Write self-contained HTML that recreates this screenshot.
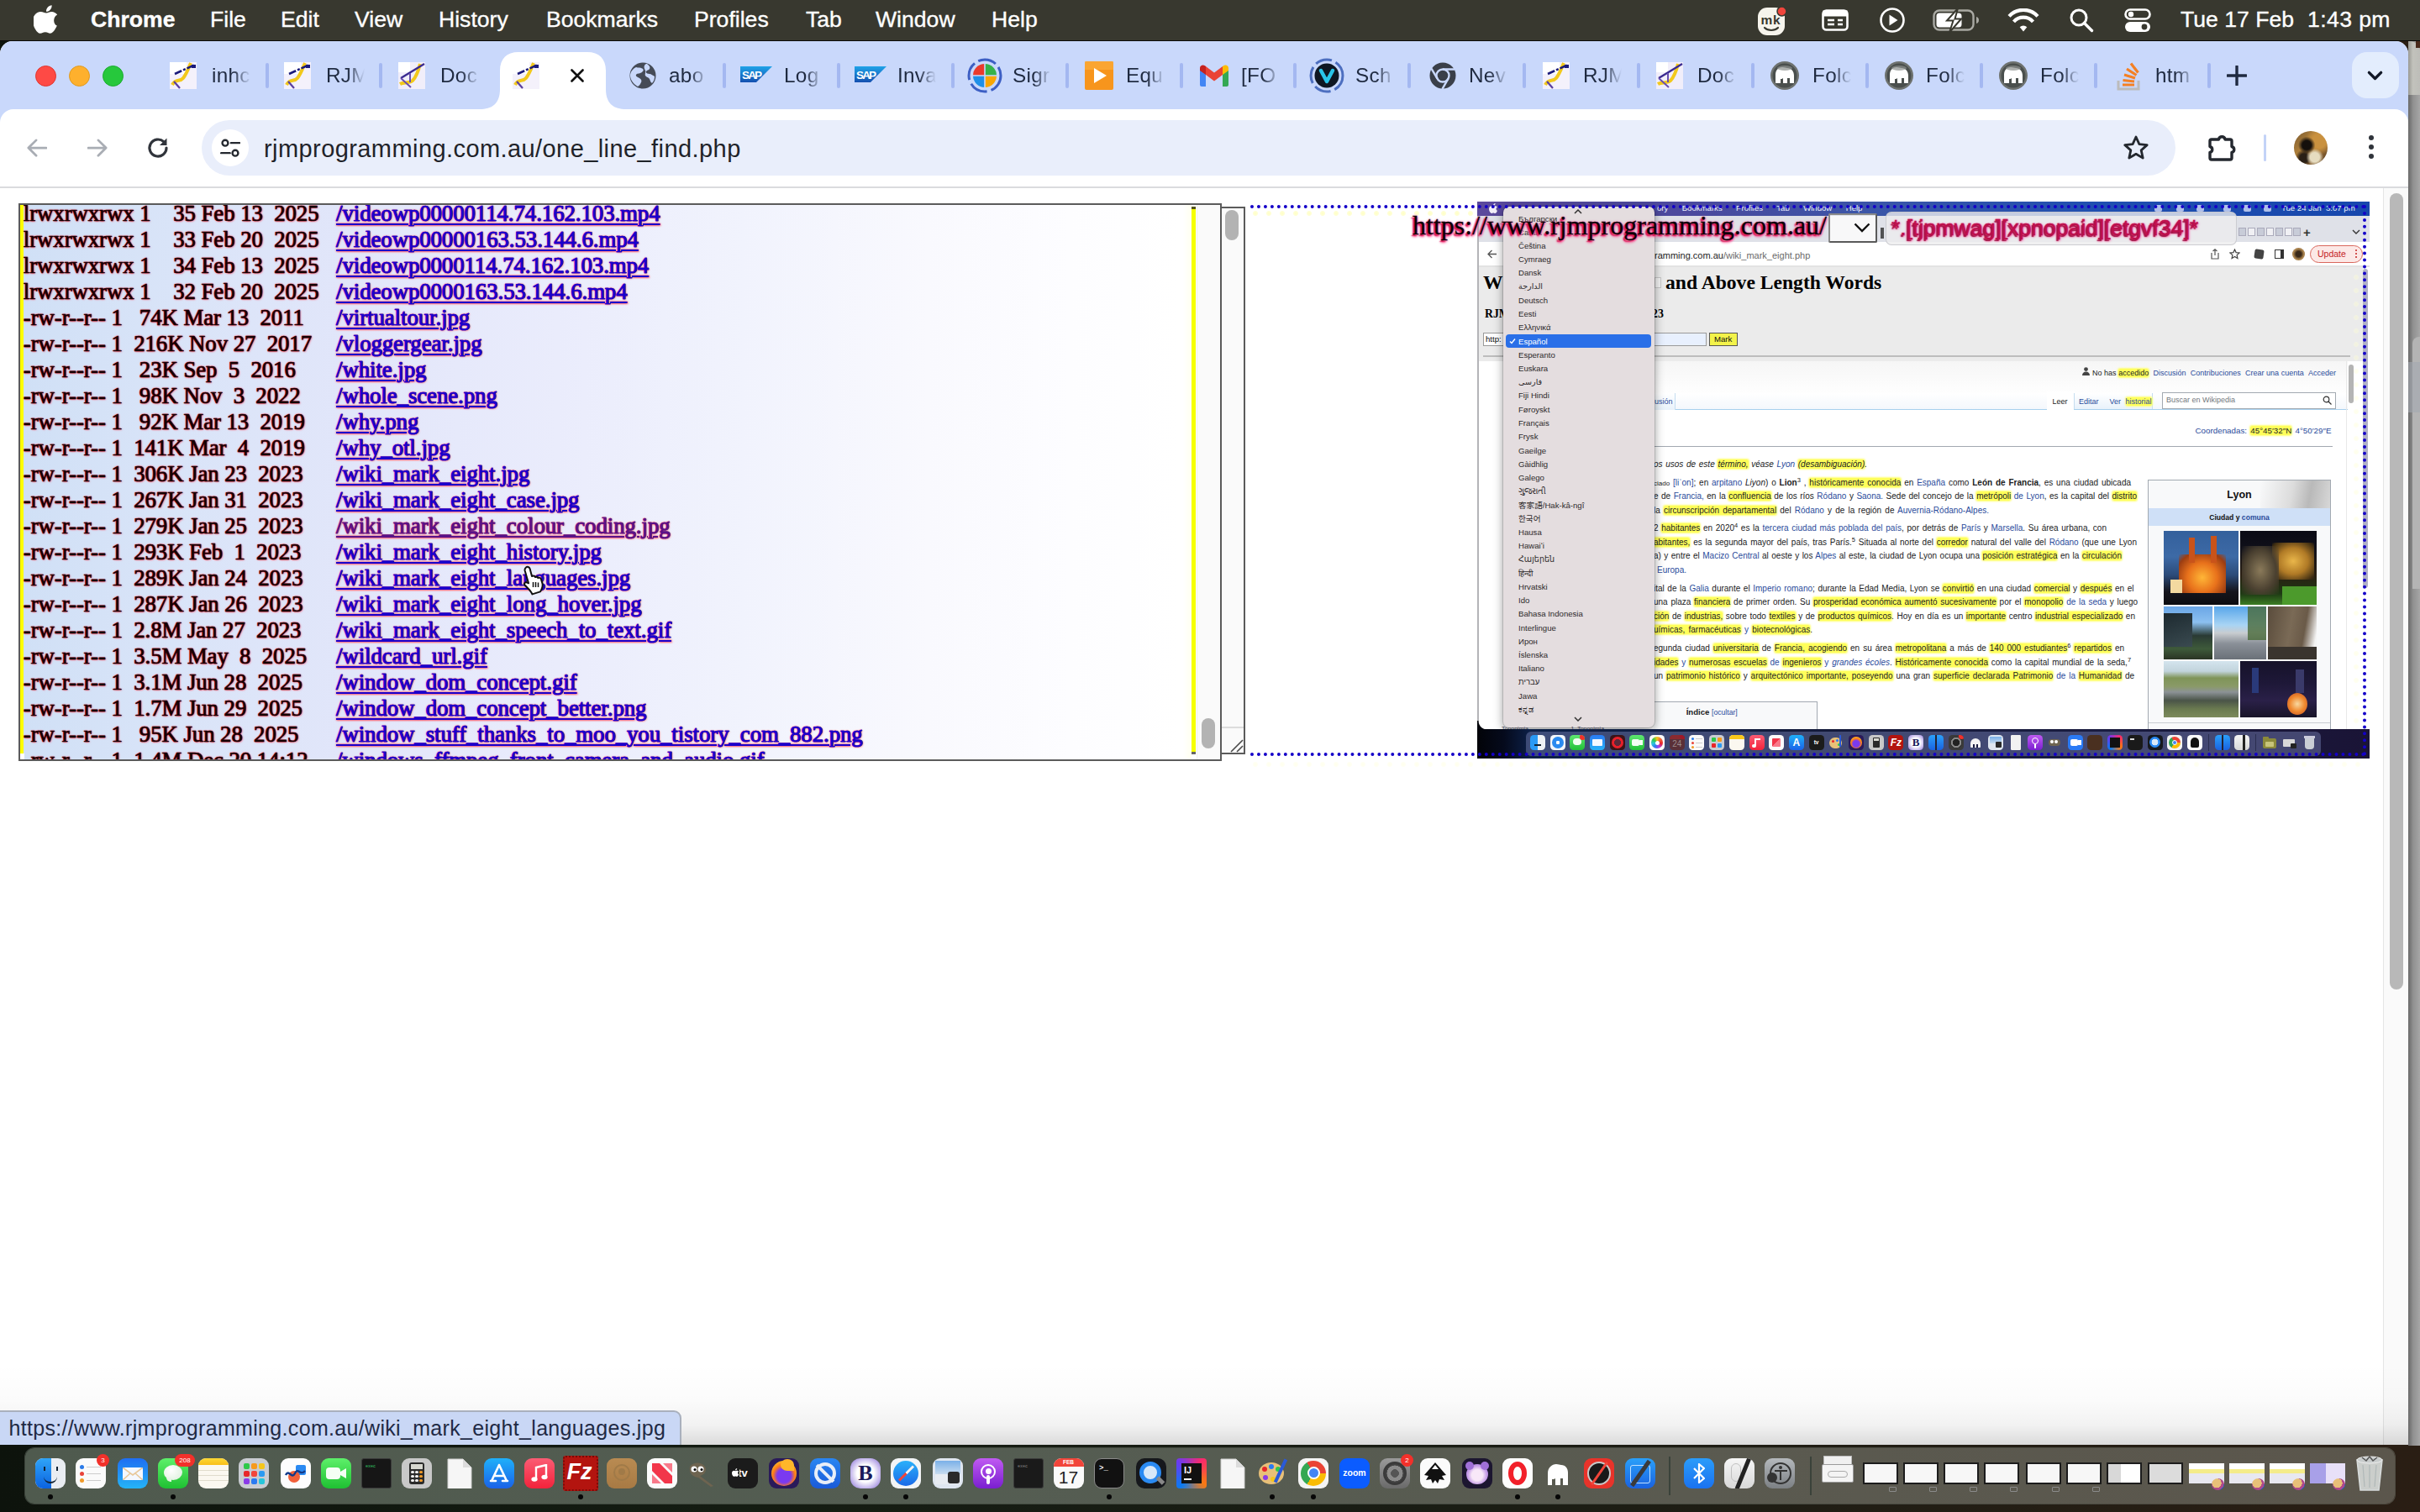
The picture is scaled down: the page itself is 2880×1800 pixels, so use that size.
<!DOCTYPE html>
<html lang="en"><head><meta charset="utf-8"><title>one_line_find</title>
<style>
*{box-sizing:border-box;margin:0;padding:0}
html,body{width:2880px;height:1800px;overflow:hidden;background:#10170f;font-family:"Liberation Sans",sans-serif}
.abs,.abs div,.abs svg,#menubar span{position:absolute}
#desk{left:0;top:0;width:2880px;height:1800px;background:linear-gradient(90deg,#0d130c 0%,#141c12 30%,#1a1d14 60%,#2a1e14 100%)}
#menubar{left:0;top:0;width:2880px;height:49px;background:#38382f;border-bottom:1.500px solid #0a0a08}
#menubar span{top:0;height:48px;line-height:47px;color:#fff;font-size:26.6px;white-space:pre;-webkit-text-stroke:.35px #fff}
#win{left:0;top:49px;width:2866px;height:1671px;background:#fff;border-radius:15px 15px 0 0;overflow:hidden}
#tabstrip{left:0;top:0;width:2866px;height:110px;background:#c9d8fb}
.tt{top:23.500px;height:34px;line-height:34px;font-size:24.300px;color:#1f2a40;white-space:pre;overflow:hidden;width:46px;letter-spacing:.3px;
 -webkit-mask-image:linear-gradient(90deg,#000 55%,transparent 100%);mask-image:linear-gradient(90deg,#000 55%,transparent 100%)}
.sep{top:26px;width:4px;height:30px;background:#a4b8f1;border-radius:2px}
.fav{top:25px;width:32px;height:32px}
#toolbar{left:0;top:81px;width:2866px;height:92px;background:#fff;border-radius:16px 16px 0 0}
#omni{left:240px;top:13px;width:2349px;height:66px;border-radius:33px;background:#e9eefb}
#tbline{left:0;top:173px;width:2866px;height:2px;background:#dadbde}

#lp{left:22px;top:242px;width:1432px;height:664px;border:2px solid #5b5b5b;background:#fff;overflow:hidden}
#lpbg{left:0;top:0;width:1400px;height:660px;background:linear-gradient(90deg,#d0e0f6 0,#d9e4f8 180px,#e2e6fa 400px,#eaecfc 640px,#f1f3fd 860px,#f9f9fe 1080px,#fdfdff 1250px,#fff 1380px)}
.rw{left:3.800px;-webkit-text-stroke:.7px #1c0006;height:31px;line-height:31px;font:400 26.670px/31px "Liberation Serif",serif;white-space:pre;color:#120003;text-shadow:0 0 2px #ff1424,0 0 1px #ff1424,1px 1px 2px rgba(255,70,90,.5)}
.lk{left:376px;-webkit-text-stroke:.65px #1a00cc;height:31px;font:400 26.670px/31px "Liberation Serif",serif;white-space:pre;color:#1a00cc;text-decoration:underline;text-decoration-thickness:2px;text-underline-offset:3px;text-shadow:0 0 2px #ff1424,0 0 1px #ff1424,1px 1px 2px rgba(255,70,90,.5)}

#mini{left:1758px;top:240px;width:1062px;height:663px;overflow:hidden;background:#fff}
#mi{left:-1758px;top:-240px;width:2880px;height:1800px}
.wl{height:16px;font:400 10px/16px "Liberation Sans",sans-serif;color:#202122;white-space:nowrap;text-align:justify;text-align-last:justify}
.wl a,.ws a{color:#2a4b9b}
.wl mark,.ws mark{background:#ffff5a;color:inherit;box-shadow:0 0 2px 1px #ffff7a;border-radius:2px}
.ws{height:14px;font:400 9px/14px "Liberation Sans",sans-serif;color:#202122;white-space:nowrap;text-align:justify;text-align-last:justify}
.dd{left:1807px;height:16px;font:400 9.600px/16px "Liberation Sans","DejaVu Sans","Noto Sans CJK KR","Noto Sans CJK TC",sans-serif;color:#2e2a2b;white-space:nowrap}
.ph{overflow:hidden}
.wl sup,.ws sup{font-size:7.500px;line-height:0;vertical-align:4.500px}


#hdr{left:1681px;top:250px;height:37px;font:400 32px/37px "Liberation Serif",serif;color:#0c0006;white-space:pre;-webkit-text-stroke:.4px #14000a;text-shadow:-2px 2px 1.500px #d8104f,-1px 3px 3px #ff4f95,1px 1px 2px #ff6aa8,0 0 3px #ff5aa0}
#sel{left:2176px;top:253.500px;width:58px;height:35px;background:rgba(252,252,252,.86);border:2px solid #8a8a8a;border-right-color:#5a5a5a;border-bottom-color:#5a5a5a;border-radius:2px}
#inp{left:2244px;top:251.700px;width:418px;height:40px;border-radius:7px;background:rgba(236,236,238,.8);border:1.500px solid rgba(200,200,205,.9)}
#inpt{left:2251px;top:255px;height:32px;font:400 26.500px/32px "Liberation Sans",sans-serif;white-space:pre;color:#c4104e;-webkit-text-stroke:.5px #b00c48;text-shadow:-1.500px 1.500px 1px #a01244,-1px 2px 3px #ff4f98,1px 1px 3px #ff7ab8,0 0 2px #ff3a8a}
#bubble{left:-2px;top:1678.500px;width:813px;height:44px;background:#c9d7f5;border:2px solid #a9b0bd;border-radius:0 9px 0 0}
#bubble div{left:10.500px;top:3px;height:32px;font:400 25px/32px "Liberation Sans",sans-serif;letter-spacing:.32px;color:#1f2a44;white-space:pre}
#dock{left:30px;top:1724px;width:2820px;height:66px;border-radius:11px;background:linear-gradient(90deg,#4f5a4e 0,#545d52 40%,#5a5a50 70%,#5b564c 100%);box-shadow:0 0 0 1px rgba(150,160,150,.35)}
.di{top:11.500px;width:36px;height:36px;border-radius:9px;overflow:hidden}
.dot{top:55px;width:6px;height:6px;border-radius:50%;background:#070707}
.th{top:17px;width:42px;height:26px;background:#f7f7f7;border:2px solid #1c1c1c}
#pg{left:0;top:-49px;width:2866px;height:1769px}
</style></head>
<body><div id="desk" class="abs"></div><div id="menubar" class="abs"><svg style="left:40px;top:6px" width="30" height="34" viewBox="0 0 30 34"><path fill="#fff" d="M21.6 0.3c.2 1.9-.6 3.8-1.7 5.100-1.200 1.400-3.100 2.400-4.900 2.300-.2-1.900.7-3.800 1.700-5 1.200-1.400 3.300-2.400 4.900-2.400zM27.800 24.600c-.8 1.800-1.200 2.600-2.200 4.200-1.400 2.200-3.400 4.900-5.900 4.900-2.200 0-2.800-1.400-5.800-1.400s-3.700 1.400-5.900 1.500c-2.400.1-4.300-2.400-5.700-4.600C-1.600 23.100-2 15.900 1.200 12c1.800-2.500 4.600-3.900 7.200-3.900 2.700 0 4.400 1.500 6.600 1.500 2.200 0 3.500-1.500 6.600-1.500 2.300 0 4.800 1.300 6.600 3.500-5.800 3.200-4.800 11.400-.4 13z"/></svg><span style="left:108px;font-weight:700;">Chrome</span><span style="left:250px;">File</span><span style="left:334px;">Edit</span><span style="left:422px;">View</span><span style="left:522px;">History</span><span style="left:650px;">Bookmarks</span><span style="left:826px;">Profiles</span><span style="left:959px;">Tab</span><span style="left:1042px;">Window</span><span style="left:1180px;">Help</span><span style="left:2595px">Tue 17 Feb</span><span style="left:2746px;letter-spacing:.4px">1:43 pm</span><svg style="left:2090px;top:6px" width="42" height="38" viewBox="0 0 42 38"><rect x="2" y="3" width="32" height="33" rx="11" fill="#f6f4ec"/><circle cx="30.500" cy="7.500" r="5.500" fill="#f0453c" stroke="#38382f" stroke-width="1.500"/><text x="5.500" y="23" font-family="Liberation Sans" font-weight="700" font-size="15.500" fill="#38382f" textLength="23">mk</text><path d="M10 27c4 4 12 4 16 0" fill="none" stroke="#38382f" stroke-width="2.200" stroke-linecap="round"/></svg>
<svg style="left:2168px;top:11px" width="32" height="26" viewBox="0 0 32 26"><rect x="1.500" y="1.500" width="29" height="23" rx="4" fill="none" stroke="#fff" stroke-width="2.600"/><rect x="1.500" y="1.500" width="29" height="7" fill="#fff"/><path d="M7 13h8M7 18h8M19 13h6M19 18h6" stroke="#fff" stroke-width="2.400"/></svg>
<svg style="left:2236px;top:8px" width="32" height="32" viewBox="0 0 32 32"><circle cx="16" cy="16" r="13.500" fill="none" stroke="#fff" stroke-width="2.600"/><path d="M12.500 9.500v13l10-6.500z" fill="#fff"/></svg>
<svg style="left:2300px;top:11px;overflow:visible" width="58" height="27" viewBox="0 0 58 27"><rect x="1.500" y="1.500" width="47" height="23" rx="6.500" fill="none" stroke="#a9a9a3" stroke-width="2.400"/><rect x="4.500" y="4.500" width="30" height="17" rx="3.500" fill="#fff"/><path d="M52 9v8c2-.6 3-2 3-4s-1-3.400-3-4z" fill="#a9a9a3"/><path d="M30 -1l-13 14.500h7.500l-4.500 14 14-16h-7.500z" fill="#fff" stroke="#38382f" stroke-width="2"/></svg>
<svg style="left:2389px;top:10px" width="38" height="28" viewBox="0 0 38 28"><path d="M19 27.500l4.300-5.300a6.200 6.200 0 0 0-8.600 0z" fill="#fff"/><path d="M7.500 15.800a15.500 15.500 0 0 1 23 0M2 9.300a23 23 0 0 1 34 0" fill="none" stroke="#fff" stroke-width="4.200" stroke-linecap="butt"/></svg>
<svg style="left:2462px;top:9px" width="30" height="30" viewBox="0 0 30 30"><circle cx="12" cy="12" r="9" fill="none" stroke="#fff" stroke-width="3"/><path d="M18.500 18.500l9 9" stroke="#fff" stroke-width="3.400" stroke-linecap="round"/></svg>
<svg style="left:2528px;top:10px" width="32" height="29" viewBox="0 0 32 29"><rect x="1.500" y="1.500" width="29" height="11" rx="5.500" fill="none" stroke="#fff" stroke-width="2.600"/><circle cx="8" cy="7" r="3.200" fill="#fff"/><rect x="1" y="16" width="30" height="12" rx="6" fill="#fff"/><circle cx="24" cy="22" r="3.400" fill="#38382f"/></svg></div><div id="win" class="abs"><div id="tabstrip"></div><svg style="left:571px;top:13px" width="174" height="68" viewBox="0 0 174 68"><path d="M0 68C14 68 24 62 24 44V22C24 8 32 0 46 0h82c14 0 22 8 22 22v22c0 18 10 24 24 24z" fill="#fff"/></svg><svg class="fav" style="left:202px" viewBox="0 0 32 32"><rect width="32" height="32" fill="#f4f1fb"/><rect x="0" y="0" width="20" height="14" fill="#fff"/><path d="M3 27c4-8 9-3 13-8 4-5 6-11 9-18" fill="none" stroke="#f2c91c" stroke-width="4"/><path d="M6 14L30 3" stroke="#1a1a7a" stroke-width="2.600" stroke-dasharray="9 2 3 2"/><rect x="26" y="3" width="5" height="4" fill="#1a1a7a"/><path d="M5 23l7 8" stroke="#5a3fa0" stroke-width="2.200"/></svg><div class="tt" style="left:252px">inhc</div><div class="sep" style="left:316px"></div><svg class="fav" style="left:338px" viewBox="0 0 32 32"><rect width="32" height="32" fill="#f4f1fb"/><rect x="0" y="0" width="20" height="14" fill="#fff"/><path d="M3 27c4-8 9-3 13-8 4-5 6-11 9-18" fill="none" stroke="#f2c91c" stroke-width="4"/><path d="M6 14L30 3" stroke="#1a1a7a" stroke-width="2.600" stroke-dasharray="9 2 3 2"/><rect x="26" y="3" width="5" height="4" fill="#1a1a7a"/><path d="M5 23l7 8" stroke="#5a3fa0" stroke-width="2.200"/></svg><div class="tt" style="left:388px">RJM</div><div class="sep" style="left:451px"></div><svg class="fav" style="left:474px" viewBox="0 0 32 32"><rect width="32" height="32" fill="#f1eefa"/><rect x="0" y="0" width="14" height="12" fill="#fff"/><path d="M2 26c5-3 10 0 15-4 5-5 7-12 9-20" fill="none" stroke="#f2c91c" stroke-width="4"/><path d="M3 19L31 2" stroke="#3a2a90" stroke-width="2.400"/><path d="M3 19l12 11M14 13v11" stroke="#6a4fb0" stroke-width="2"/></svg><div class="tt" style="left:524px">Doc</div><svg class="fav" style="left:610px" viewBox="0 0 32 32"><rect width="32" height="32" fill="#f4f1fb"/><rect x="0" y="0" width="20" height="14" fill="#fff"/><path d="M3 27c4-8 9-3 13-8 4-5 6-11 9-18" fill="none" stroke="#f2c91c" stroke-width="4"/><path d="M6 14L30 3" stroke="#1a1a7a" stroke-width="2.600" stroke-dasharray="9 2 3 2"/><rect x="26" y="3" width="5" height="4" fill="#1a1a7a"/><path d="M5 23l7 8" stroke="#5a3fa0" stroke-width="2.200"/></svg><svg class="fav" style="left:748px;top:24px;width:34px;height:34px" viewBox="0 0 34 34"><circle cx="17" cy="17" r="15.500" fill="#454b57"/><path d="M9 7c3 1 6 0 8 2s-1 4-3 5-4 0-5 2 2 3 4 4 3 3 2 5-2 4-4 5C6 27 2 22 2 17 2 13 5 9 9 7zM22 3c3 2 4 4 3 6s-3 1-4 3 2 3 4 3 4 2 6 3c0 3-1 6-3 8-2-1-2-3-3-5s-4-2-5-4 1-4 0-6-2-4-1-6 2-2 3-2z" fill="#c9d8fb"/></svg><div class="tt" style="left:796px">abo</div><div class="sep" style="left:860px"></div><svg class="fav" style="left:881px;top:28px;width:38px;height:24px" viewBox="0 0 38 24"><defs><linearGradient id="sg881" x1="0" y1="0" x2="0" y2="1"><stop offset="0" stop-color="#1fa3e8"/><stop offset="1" stop-color="#1450b0"/></linearGradient></defs><path d="M0 2h38L19 21H0z" fill="url(#sg881)"/><text x="2" y="17" font-family="Liberation Sans" font-weight="700" font-size="13.500" fill="#fff" style="position:static" textLength="24">SAP</text></svg><div class="tt" style="left:933px">Log</div><div class="sep" style="left:996px"></div><svg class="fav" style="left:1017px;top:28px;width:38px;height:24px" viewBox="0 0 38 24"><defs><linearGradient id="sg1017" x1="0" y1="0" x2="0" y2="1"><stop offset="0" stop-color="#1fa3e8"/><stop offset="1" stop-color="#1450b0"/></linearGradient></defs><path d="M0 2h38L19 21H0z" fill="url(#sg1017)"/><text x="2" y="17" font-family="Liberation Sans" font-weight="700" font-size="13.500" fill="#fff" style="position:static" textLength="24">SAP</text></svg><div class="tt" style="left:1068px">Inva</div><div class="sep" style="left:1132px"></div><svg class="fav" style="left:1151px;top:20px;width:42px;height:42px" viewBox="0 0 42 42"><circle cx="21" cy="21" r="19" fill="none" stroke="#3d5fc4" stroke-width="3" stroke-dasharray="22 5"/><path d="M21 21V7A14 14 0 0 0 7 21z" fill="#ea3a2d"/><path d="M21 21h14A14 14 0 0 0 21 7z" fill="#36b24a"/><path d="M21 21H7a14 14 0 0 0 14 14z" fill="#1f8fe8"/><path d="M21 21v14a14 14 0 0 0 14-14z" fill="#f9a602"/><path d="M21 6v30M6 21h30" stroke="#c9d8fb" stroke-width="1.600"/></svg><div class="tt" style="left:1205px">Sigr</div><div class="sep" style="left:1268px"></div><svg class="fav" style="left:1291px;top:24px;width:34px;height:34px" viewBox="0 0 34 34"><rect width="34" height="34" rx="2" fill="#f7951d"/><rect x="0" y="0" width="34" height="10" fill="#fbb040" opacity=".6"/><path d="M11 8v18l15-9z" fill="#fff"/></svg><div class="tt" style="left:1340px">Equ</div><div class="sep" style="left:1404px"></div><svg class="fav" style="left:1428px;top:28px;width:34px;height:26px" viewBox="0 0 34 26"><path d="M0 4v20a2 2 0 0 0 2 2h5V9z" fill="#4285f4"/><path d="M34 4v20a2 2 0 0 1-2 2h-5V9z" fill="#34a853"/><path d="M27 2v10l7-5V4c0-3-3.500-4.500-6-2.700z" fill="#fbbc04"/><path d="M7 12V2l10 7.500L27 2v10l-10 7.500z" fill="#ea4335"/><path d="M0 4v3l7 5V2L6 1.300C3.500-.5 0 1 0 4z" fill="#c5221f"/></svg><div class="tt" style="left:1477px">[FO</div><div class="sep" style="left:1539px"></div><svg class="fav" style="left:1558px;top:20px;width:42px;height:42px" viewBox="0 0 42 42"><circle cx="21" cy="21" r="19" fill="none" stroke="#4d6fc0" stroke-width="3" stroke-dasharray="20 5"/><circle cx="21" cy="21" r="14.500" fill="#0f1722"/><path d="M14 15l7 13 7-13" fill="none" stroke="#29c4e8" stroke-width="4.500" stroke-linejoin="round" stroke-linecap="round"/></svg><div class="tt" style="left:1613px">Sch</div><div class="sep" style="left:1675px"></div><svg class="fav" style="left:1700px;top:24px;width:34px;height:34px" viewBox="0 0 34 34"><circle cx="17" cy="17" r="15.500" fill="#3a3f49"/><circle cx="17" cy="17" r="7.500" fill="none" stroke="#c9d8fb" stroke-width="2.400"/><path d="M17 9.500h14M10.500 20.700L3.500 8.600M23.500 20.700l-7 12.100" stroke="#c9d8fb" stroke-width="2.400"/><circle cx="17" cy="17" r="5" fill="#3a3f49"/></svg><div class="tt" style="left:1748px">Nev</div><div class="sep" style="left:1812px"></div><svg class="fav" style="left:1836px" viewBox="0 0 32 32"><rect width="32" height="32" fill="#f4f1fb"/><rect x="0" y="0" width="20" height="14" fill="#fff"/><path d="M3 27c4-8 9-3 13-8 4-5 6-11 9-18" fill="none" stroke="#f2c91c" stroke-width="4"/><path d="M6 14L30 3" stroke="#1a1a7a" stroke-width="2.600" stroke-dasharray="9 2 3 2"/><rect x="26" y="3" width="5" height="4" fill="#1a1a7a"/><path d="M5 23l7 8" stroke="#5a3fa0" stroke-width="2.200"/></svg><div class="tt" style="left:1884px">RJM</div><div class="sep" style="left:1948px"></div><svg class="fav" style="left:1971px" viewBox="0 0 32 32"><rect width="32" height="32" fill="#f1eefa"/><rect x="0" y="0" width="14" height="12" fill="#fff"/><path d="M2 26c5-3 10 0 15-4 5-5 7-12 9-20" fill="none" stroke="#f2c91c" stroke-width="4"/><path d="M3 19L31 2" stroke="#3a2a90" stroke-width="2.400"/><path d="M3 19l12 11M14 13v11" stroke="#6a4fb0" stroke-width="2"/></svg><div class="tt" style="left:2020px">Doc</div><div class="sep" style="left:2084px"></div><svg class="fav" style="left:2106px;top:23px;width:36px;height:36px" viewBox="0 0 36 36"><circle cx="18" cy="18" r="17" fill="#6e726f"/><circle cx="18" cy="18" r="14.500" fill="#4a4f4d"/><path d="M7 27V17c0-6 4-9 8-9 3 0 4 1 6 1 5 0 8 4 8 9v9h-5v-6h-3v6h-5v-6c-1 1-2 1-3 1v5z" fill="#fff"/><ellipse cx="18" cy="9" rx="9" ry="3" fill="#8c908d" opacity=".7"/></svg><div class="tt" style="left:2157px">Folc</div><div class="sep" style="left:2220px"></div><svg class="fav" style="left:2242px;top:23px;width:36px;height:36px" viewBox="0 0 36 36"><circle cx="18" cy="18" r="17" fill="#6e726f"/><circle cx="18" cy="18" r="14.500" fill="#4a4f4d"/><path d="M7 27V17c0-6 4-9 8-9 3 0 4 1 6 1 5 0 8 4 8 9v9h-5v-6h-3v6h-5v-6c-1 1-2 1-3 1v5z" fill="#fff"/><ellipse cx="18" cy="9" rx="9" ry="3" fill="#8c908d" opacity=".7"/></svg><div class="tt" style="left:2292px">Folc</div><div class="sep" style="left:2356px"></div><svg class="fav" style="left:2378px;top:23px;width:36px;height:36px" viewBox="0 0 36 36"><circle cx="18" cy="18" r="17" fill="#6e726f"/><circle cx="18" cy="18" r="14.500" fill="#4a4f4d"/><path d="M7 27V17c0-6 4-9 8-9 3 0 4 1 6 1 5 0 8 4 8 9v9h-5v-6h-3v6h-5v-6c-1 1-2 1-3 1v5z" fill="#fff"/><ellipse cx="18" cy="9" rx="9" ry="3" fill="#8c908d" opacity=".7"/></svg><div class="tt" style="left:2428px">Folc</div><div class="sep" style="left:2492px"></div><svg class="fav" style="left:2519px;top:23px;width:28px;height:36px" viewBox="0 0 28 36"><path d="M2 24v10h24V24" fill="none" stroke="#bcbbbb" stroke-width="3"/><path d="M7 29h14M7.500 23.500l13.500 1.500M9 17l13 4M12 10l11.500 7.500M17 3.500l8.500 11" stroke="#f48024" stroke-width="3.200"/></svg><div class="tt" style="left:2565px">htm</div><div class="sep" style="left:2627px"></div><svg style="left:678px;top:32px" width="18" height="18" viewBox="0 0 22 22"><path d="M3 3l16 16M19 3L3 19" stroke="#111" stroke-width="3.200" stroke-linecap="round"/></svg><svg style="left:2650px;top:29px" width="24" height="24" viewBox="0 0 24 24"><path d="M12 1v22M1 12h22" stroke="#1f2a40" stroke-width="3.400" stroke-linecap="round"/></svg><div style="left:2799px;top:13px;width:56px;height:55px;border-radius:18px;background:#e3edfd"></div><svg style="left:2817px;top:35px" width="19" height="12.700" viewBox="0 0 24 16"><path d="M3 3l9 9 9-9" fill="none" stroke="#111827" stroke-width="4.200" stroke-linecap="round" stroke-linejoin="round"/></svg><div style="left:41.5px;top:29.0px;width:25px;height:25px;border-radius:50%;background:#fe4a45;border:1px solid #e0352f"></div><div style="left:81.5px;top:29.0px;width:25px;height:25px;border-radius:50%;background:#feb02d;border:1px solid #e09a1f"></div><div style="left:121.5px;top:29.0px;width:25px;height:25px;border-radius:50%;background:#26c83c;border:1px solid #1aab2d"></div><div id="toolbar"><svg style="left:32px;top:35px" width="24" height="22.200" viewBox="0 0 26 24"><path d="M12 2L2 12l10 10M2.500 12H25" fill="none" stroke="#a9adb4" stroke-width="3" stroke-linecap="round" stroke-linejoin="round"/></svg><svg style="left:104px;top:35px" width="24" height="22.200" viewBox="0 0 26 24"><path d="M14 2l10 10-10 10M23.500 12H1" fill="none" stroke="#a9adb4" stroke-width="3" stroke-linecap="round" stroke-linejoin="round"/></svg><svg style="left:174px;top:32px" width="28" height="28" viewBox="0 0 28 28"><path d="M24 14a10 10 0 1 1-3.200-7.300" fill="none" stroke="#30343b" stroke-width="3.200" stroke-linecap="round"/><path d="M24.500 2.500v8.500H16z" fill="#30343b"/></svg><div id="omni"></div><div style="left:252px;top:24px;width:44px;height:44px;border-radius:50%;background:#fff"></div><svg style="left:262px;top:34.500px" width="24" height="22.300" viewBox="0 0 28 26"><circle cx="7" cy="6" r="4" fill="none" stroke="#24282f" stroke-width="2.800"/><path d="M15 6h12" stroke="#24282f" stroke-width="2.800" stroke-linecap="round"/><circle cx="21" cy="20" r="4" fill="none" stroke="#24282f" stroke-width="2.800"/><path d="M1.500 20h12" stroke="#24282f" stroke-width="2.800" stroke-linecap="round"/></svg><div style="left:314px;top:27px;height:40px;line-height:40px;font-size:29px;letter-spacing:.42px;color:#1f2329;white-space:pre">rjmprogramming.com.au/one_line_find.php</div><svg style="left:2526px;top:30px" width="32" height="32" viewBox="0 0 32 32"><path d="M16 3l3.900 8.600 9.300 1-7 6.300 2 9.200L16 23.300 7.800 28.100l2-9.200-7-6.300 9.300-1z" fill="none" stroke="#24282f" stroke-width="2.800" stroke-linejoin="round"/></svg><svg style="left:2624px;top:25px" width="40" height="40" viewBox="0 0 40 40"><path d="M8 11h8.500a3.800 3.800 0 0 1 7.500 0H30a2 2 0 0 1 2 2v6.500a3.600 3.600 0 0 1 0 7V33a2 2 0 0 1-2 2H8a2 2 0 0 1-2-2v-6.500a3.600 3.600 0 0 0 0-7V13a2 2 0 0 1 2-2z" fill="none" stroke="#24282f" stroke-width="3.400" stroke-linejoin="round"/></svg><div style="left:2694px;top:30px;width:3px;height:32px;background:#c3d3f7;border-radius:2px"></div><div style="left:2730px;top:26px;width:40px;height:40px;border-radius:50%;overflow:hidden;background:radial-gradient(circle at 38% 42%,#15100c 0 16%,transparent 30%),radial-gradient(circle at 62% 78%,#e6dcc0 0 14%,transparent 26%),radial-gradient(circle at 30% 80%,#2a2016 0 12%,transparent 24%),radial-gradient(circle at 75% 30%,#c9913f 0 20%,transparent 40%),linear-gradient(135deg,#7a5a30,#b8863c 45%,#8a6232 70%,#5a4020)"></div><div style="left:2819px;top:31px;width:6px;height:6px;border-radius:50%;background:#30343b"></div><div style="left:2819px;top:42px;width:6px;height:6px;border-radius:50%;background:#30343b"></div><div style="left:2819px;top:53px;width:6px;height:6px;border-radius:50%;background:#30343b"></div></div><div id="tbline"></div><div id="pg"><div id="lp"><div id="lpbg"></div><div class="rw" style="top:-5.2px">lrwxrwxrwx 1    35 Feb 13  2025</div><div class="lk" style="top:-5.2px">/videowp00000114.74.162.103.mp4</div><div class="rw" style="top:25.8px">lrwxrwxrwx 1    33 Feb 20  2025</div><div class="lk" style="top:25.8px">/videowp00000163.53.144.6.mp4</div><div class="rw" style="top:56.8px">lrwxrwxrwx 1    34 Feb 13  2025</div><div class="lk" style="top:56.8px">/videowp0000114.74.162.103.mp4</div><div class="rw" style="top:87.8px">lrwxrwxrwx 1    32 Feb 20  2025</div><div class="lk" style="top:87.8px">/videowp0000163.53.144.6.mp4</div><div class="rw" style="top:118.8px">-rw-r--r-- 1   74K Mar 13  2011</div><div class="lk" style="top:118.8px">/virtualtour.jpg</div><div class="rw" style="top:149.8px">-rw-r--r-- 1  216K Nov 27  2017</div><div class="lk" style="top:149.8px">/vloggergear.jpg</div><div class="rw" style="top:180.8px">-rw-r--r-- 1   23K Sep  5  2016</div><div class="lk" style="top:180.8px">/white.jpg</div><div class="rw" style="top:211.8px">-rw-r--r-- 1   98K Nov  3  2022</div><div class="lk" style="top:211.8px">/whole_scene.png</div><div class="rw" style="top:242.8px">-rw-r--r-- 1   92K Mar 13  2019</div><div class="lk" style="top:242.8px">/why.png</div><div class="rw" style="top:273.8px">-rw-r--r-- 1  141K Mar  4  2019</div><div class="lk" style="top:273.8px">/why_otl.jpg</div><div class="rw" style="top:304.8px">-rw-r--r-- 1  306K Jan 23  2023</div><div class="lk" style="top:304.8px">/wiki_mark_eight.jpg</div><div class="rw" style="top:335.8px">-rw-r--r-- 1  267K Jan 31  2023</div><div class="lk" style="top:335.8px">/wiki_mark_eight_case.jpg</div><div class="rw" style="top:366.8px">-rw-r--r-- 1  279K Jan 25  2023</div><div class="lk" style="top:366.8px;color:#5a1288;-webkit-text-stroke-color:#5a1288">/wiki_mark_eight_colour_coding.jpg</div><div class="rw" style="top:397.8px">-rw-r--r-- 1  293K Feb  1  2023</div><div class="lk" style="top:397.8px">/wiki_mark_eight_history.jpg</div><div class="rw" style="top:428.8px">-rw-r--r-- 1  289K Jan 24  2023</div><div class="lk" style="top:428.8px">/wiki_mark_eight_languages.jpg</div><div class="rw" style="top:459.8px">-rw-r--r-- 1  287K Jan 26  2023</div><div class="lk" style="top:459.8px">/wiki_mark_eight_long_hover.jpg</div><div class="rw" style="top:490.8px">-rw-r--r-- 1  2.8M Jan 27  2023</div><div class="lk" style="top:490.8px">/wiki_mark_eight_speech_to_text.gif</div><div class="rw" style="top:521.8px">-rw-r--r-- 1  3.5M May  8  2025</div><div class="lk" style="top:521.8px">/wildcard_url.gif</div><div class="rw" style="top:552.8px">-rw-r--r-- 1  3.1M Jun 28  2025</div><div class="lk" style="top:552.8px">/window_dom_concept.gif</div><div class="rw" style="top:583.8px">-rw-r--r-- 1  1.7M Jun 29  2025</div><div class="lk" style="top:583.8px">/window_dom_concept_better.png</div><div class="rw" style="top:614.8px">-rw-r--r-- 1   95K Jun 28  2025</div><div class="lk" style="top:614.8px">/window_stuff_thanks_to_moo_you_tistory_com_882.png</div><div class="rw" style="top:645.8px">-rw-r--r-- 1  1.4M Dec 20 14:12</div><div class="lk" style="top:645.8px">/windows_ffmpeg_front_camera_and_audio.gif</div><div style="left:0;top:0;width:4px;height:653px;background:#ffff00"></div><div style="left:0;top:653px;width:5px;height:8px;background:#fff"></div><div style="left:1394px;top:2px;width:4.500px;height:651px;background:#f6ff00"></div><div style="left:1394px;top:2px;width:4.500px;height:3px;background:#55551a"></div><div style="left:1393px;top:651px;width:6px;height:3px;background:#666"></div><div style="left:1384px;top:0;width:10px;height:660px;background:linear-gradient(90deg,#fff,#fffff0)"></div><div style="left:1400px;top:0;width:28px;height:660px;background:#fafafa;border-left:1px solid #f0f0f0"></div><div style="left:1406px;top:611px;width:16px;height:36px;border-radius:8px;background:#b3b3b3"></div></div><div style="left:1454px;top:246px;width:28px;height:652px;background:#fafafa;border:2px solid #5b5b5b;border-left:none"></div><div style="left:1458px;top:250px;width:16px;height:36px;border-radius:8px;background:#b3b3b3"></div><div style="left:1454px;top:865px;width:26px;height:2px;background:#dcdcdc"></div><svg style="left:1462px;top:878px" width="18" height="18" viewBox="0 0 18 18"><path d="M3 17L17 3M10 17l7-7" stroke="#4a4a4a" stroke-width="1.600"/></svg><svg style="left:621px;top:673px" width="26" height="36" viewBox="0 0 26 36"><path d="M5 2.500c1.500-1.500 4-.5 4.600 1.500L12 13l1-.3c1.300-.4 2.500.200 3 1.300 1.200-.6 2.600-.2 3.300 1 1.300-.7 3-.1 3.600 1.400l1.400 4.500c.9 3 .3 5.500-1 8l-1.300 2.500-9.500 3-1.200-2.200C9.500 29 6 26.500 3.500 23.500c-1.300-1.600.2-3.800 2.200-3.200l2.300 1L3.700 6.500c-.4-1.500.1-3 1.300-4z" fill="#fff" stroke="#111" stroke-width="2" stroke-linejoin="round"/><path d="M13.500 20v6M16.500 20v6M19.500 20.500v5.500" stroke="#111" stroke-width="1.500"/></svg><div id="mini"><div id="mi"><div style="left:1758px;top:318px;width:1054px;height:112px;background:#ebebeb"></div><div style="left:2812px;top:320px;width:6px;height:380px;border-radius:3px;background:#b2b2c6"></div><div style="left:1758px;top:240px;width:1062px;height:17px;background:linear-gradient(90deg,#5c4a9c 0,#4a4a9e 25%,#3a56a8 45%,#1f4fb0 70%,#1747ad 100%)"></div><svg style="left:1772px;top:242px" width="11" height="12" viewBox="0 0 11 12"><path d="M7.600 0c.1.900-.5 1.800-1 2.200-.500.400-1.200.600-1.700.500C4.900 2 5.300 1.300 5.700.900 6.200.400 7 0 7.600 0zM10 8.700c-.6 1.500-1.600 3.200-2.800 3.200-.800 0-1-.5-2-.5s-1.300.5-2.100.5C1.600 11.900 0 9 0 6.800 0 4.500 1.500 3.300 2.900 3.300c.900 0 1.600.5 2.300.5.700 0 1.200-.5 2.400-.5.800 0 1.700.4 2.300 1.200C8 5.600 8.300 8.100 10 8.700z" fill="#f2eef8"/></svg><div style="left:1972px;top:241px;height:14px;font:400 9.600px/14px 'Liberation Sans',sans-serif;color:#e8ecff;white-space:pre;word-spacing:2.800px">ory   Bookmarks   Profiles   Tab   Window   Help</div><div style="left:2715px;top:241px;height:14px;font:400 9.600px/14px 'Liberation Sans',sans-serif;color:#e8ecff;white-space:pre">Tue 24 Jan  3:07 pm</div><div style="left:2564px;top:244px;width:9px;height:8px;border-radius:2px;background:#c9d4f4;opacity:.85"></div><div style="left:2590px;top:244px;width:9px;height:8px;border-radius:2px;background:#c9d4f4;opacity:.85"></div><div style="left:2614px;top:244px;width:9px;height:8px;border-radius:2px;background:#c9d4f4;opacity:.85"></div><div style="left:2646px;top:244px;width:9px;height:8px;border-radius:2px;background:#c9d4f4;opacity:.85"></div><div style="left:2670px;top:244px;width:9px;height:8px;border-radius:2px;background:#c9d4f4;opacity:.85"></div><div style="left:2694px;top:244px;width:9px;height:8px;border-radius:2px;background:#c9d4f4;opacity:.85"></div><div style="left:1758px;top:257px;width:1062px;height:31px;background:#dfe1e8"></div><div style="left:1758px;top:288px;width:1062px;height:30px;background:#fff"></div><div style="left:1758px;top:316px;width:1062px;height:2px;background:#e3e3e3"></div><svg style="left:1770px;top:297px" width="12" height="11" viewBox="0 0 12 11"><path d="M5.500 1L1 5.500 5.500 10M1 5.500h10" fill="none" stroke="#555" stroke-width="1.300"/></svg><div style="left:1969px;top:295.500px;height:16px;font:400 11px/16px 'Liberation Sans',sans-serif;color:#222;white-space:pre">ramming.com.au<span style="color:#6a6a6a">/wiki_mark_eight.php</span></div><div style="left:2664px;top:271px;width:9px;height:10px;background:#c8ccd8;border:1px solid #aab"></div><div style="left:2675px;top:271px;width:9px;height:10px;background:#f0f0f4;border:1px solid #aab"></div><div style="left:2686px;top:271px;width:9px;height:10px;background:#c8ccd8;border:1px solid #aab"></div><div style="left:2697px;top:271px;width:9px;height:10px;background:#f0f0f4;border:1px solid #aab"></div><div style="left:2708px;top:271px;width:9px;height:10px;background:#c8ccd8;border:1px solid #aab"></div><div style="left:2719px;top:271px;width:9px;height:10px;background:#f0f0f4;border:1px solid #aab"></div><div style="left:2729px;top:271px;width:9px;height:10px;background:#c8ccd8;border:1px solid #aab"></div><div style="left:2741px;top:268.500px;height:16px;font:700 15px/16px 'Liberation Sans',sans-serif;color:#333">+</div><svg style="left:2799px;top:273px" width="10" height="7" viewBox="0 0 10 7"><path d="M1 1l4 4 4-4" fill="none" stroke="#333" stroke-width="1.400"/></svg><svg style="left:2631px;top:296px" width="10" height="13" viewBox="0 0 10 13"><path d="M1 5v7h8V5M5 8V1M2.500 3L5 .8 7.500 3" fill="none" stroke="#555" stroke-width="1.200"/></svg><svg style="left:2653px;top:296px" width="13" height="13" viewBox="0 0 13 13"><path d="M6.500 1l1.600 3.600 3.900.4-2.900 2.600.8 3.900-3.400-2-3.400 2 .8-3.900L1 5l3.900-.4z" fill="none" stroke="#444" stroke-width="1.200"/></svg><div style="left:2683px;top:297px;width:11px;height:11px;background:#444;border-radius:2px;transform:rotate(8deg)"></div><div style="left:2707px;top:297px;width:11px;height:11px;border:1.500px solid #333;border-right-width:4px"></div><div style="left:2728px;top:295px;width:15px;height:15px;border-radius:50%;background:radial-gradient(circle,#3a2a1a 0 30%,#b08850 60%,#6a4a2a)"></div><div style="left:2749px;top:292px;width:63px;height:21px;border-radius:11px;background:#fce8e6;border:1px solid #d9675c"></div><div style="left:2758px;top:295px;height:15px;font:400 10.500px/15px 'Liberation Sans',sans-serif;color:#c5221f">Update</div><div style="left:2803px;top:297px;width:2px;height:2px;border-radius:50%;background:#c5221f"></div><div style="left:2803px;top:301px;width:2px;height:2px;border-radius:50%;background:#c5221f"></div><div style="left:2803px;top:305px;width:2px;height:2px;border-radius:50%;background:#c5221f"></div><div style="left:1758px;top:257px;width:2px;height:611px;background:#b4b4b8"></div><div style="left:1765px;top:322px;height:28px;font:700 23.600px/28px 'Liberation Serif',serif;color:#000;white-space:pre">W</div><div style="left:1982px;top:322px;height:28px;font:700 23.600px/28px 'Liberation Serif',serif;color:#000;white-space:pre">and Above Length Words</div><div style="left:1969px;top:330px;width:8px;height:13px;border:1px solid #c8c8c8;background:#f4f4f4"></div><div style="left:1767px;top:365px;height:18px;font:700 13.800px/18px 'Liberation Serif',serif;color:#000;white-space:pre">RJM</div><div style="left:1966px;top:365px;height:18px;font:700 13.800px/18px 'Liberation Serif',serif;color:#000;white-space:pre">23</div><div style="left:1765px;top:396px;width:266px;height:16px;background:#fff;border:1px solid #9a9a9a"></div><div style="left:1968px;top:397px;width:62px;height:14px;background:#e8f0fe"></div><div style="left:1768px;top:397px;height:14px;font:400 9.600px/14px 'Liberation Sans',sans-serif;color:#111">http:</div><div style="left:2034px;top:396px;width:34px;height:16px;background:#f3f34a;border:1px solid #555"></div><div style="left:2040px;top:397px;height:14px;font:400 9.600px/14px 'Liberation Sans',sans-serif;color:#111">Mark</div><div style="left:1765px;top:423px;width:1032px;height:2px;background:#bdbdbd"></div><div style="left:1764px;top:430px;width:1040px;height:440px;background:#fff"></div><div style="left:1968px;top:430px;width:826px;height:42px;background:linear-gradient(#f6f6f6,#fff)"></div><svg style="left:2478px;top:437px" width="9" height="10" viewBox="0 0 9 10"><circle cx="4.500" cy="2.600" r="2.400" fill="#444"/><path d="M0 10c0-3 2-4.500 4.500-4.500S9 7 9 10z" fill="#444"/></svg><div class="ws" style="left:2490px;top:437px;width:290px">No has <mark>accedido</mark> &nbsp;<a>Discusión</a> &nbsp;<a>Contribuciones</a> &nbsp;<a>Crear una cuenta</a> &nbsp;<a>Acceder</a></div><div style="left:1968px;top:468px;width:826px;height:20px;background:linear-gradient(#fff,#f3f7fc)"></div><div style="left:1968px;top:487px;width:826px;height:1px;background:#a7d0ee"></div><div style="left:1968px;top:468px;width:26px;height:20px;background:linear-gradient(#fff,#e8f2fb);border-right:1px solid #c5ddf0"></div><div class="ws" style="left:1969px;top:471px;width:19px"><a>usión</a></div><div style="left:2436px;top:466px;width:32px;height:23px;background:#fff"></div><div style="left:2468px;top:468px;width:94px;height:19px;background:linear-gradient(#fff,#e8f2fb);border-left:1px solid #c5ddf0;border-right:1px solid #c5ddf0"></div><div class="ws" style="left:2442.600px;top:471px;width:24px">Leer</div><div class="ws" style="left:2474px;top:471px;width:28px"><a>Editar</a></div><div class="ws" style="left:2510.600px;top:471px;width:50px"><a>Ver</a> <mark><a>historial</a></mark></div><div style="left:2573px;top:466.600px;width:207px;height:20px;background:#fff;border:1px solid #a2a9b1"></div><div class="ws" style="left:2578px;top:469px;color:#72777d;text-align-last:left">Buscar en Wikipedia</div><svg style="left:2764px;top:471px" width="11" height="11" viewBox="0 0 11 11"><circle cx="4.500" cy="4.500" r="3.300" fill="none" stroke="#333" stroke-width="1.200"/><path d="M7 7l3.500 3.500" stroke="#333" stroke-width="1.300"/></svg><div class="ws" style="left:2612.500px;top:505.600px;width:162px;font-size:9.800px"><a>Coordenadas:</a> <mark>45°45′32″N</mark> <a>4°50′29″E</a></div><div style="left:1968px;top:531px;width:808px;height:1px;background:#a2a9b1"></div><div class="wl" style="left:1968px;top:544.5px;width:254px"><i>os usos de este <mark>término,</mark> véase <a>Lyon</a> <mark>(desambiguación)</mark>.</i></div><div class="wl" style="left:1968px;top:566.8px;width:568px"><span style="font-size:8px">ciado</span> <a>[liˈon]</a>; en <a>arpitano</a> <i>Liyon</i>) o <b>Lion</b><sup>3</sup> , <mark>históricamente conocida</mark> en <a>España</a> como <b>León de Francia</b>, es una ciudad ubicada</div><div class="wl" style="left:1968px;top:583.4px;width:575px">e de <a>Francia,</a> en la <mark>confluencia</mark> de los ríos <a>Ródano</a> y <a>Saona.</a> Sede del concejo de la <mark>metrópoli</mark> <a>de Lyon</a>, es la capital del <mark>distrito</mark></div><div class="wl" style="left:1968px;top:599.6px;width:399px">la <mark>circunscripción departamental</mark> del <a>Ródano</a> y de la región de <a>Auvernia-Ródano-Alpes.</a></div><div class="wl" style="left:1968px;top:621.0px;width:539px">2 <mark>habitantes</mark> en 2020<sup>4</sup>  es la <a>tercera ciudad más poblada del país</a>, por detrás de <a>París</a> y <a>Marsella</a>. Su área urbana, con</div><div class="wl" style="left:1968px;top:637.7px;width:575px"><mark>abitantes,</mark> es la segunda mayor del país, tras París.<sup>5</sup>  Situada al norte del <mark>corredor</mark> natural del valle del <a>Ródano</a> (que une Lyon</div><div class="wl" style="left:1968px;top:654.4px;width:557px">a) y entre el <a>Macizo Central</a> al oeste y los <a>Alpes</a> al este, la ciudad de Lyon ocupa una <mark>posición estratégica</mark> en la <mark>circulación</mark></div><div class="wl" style="left:1972px;top:671.0px;width:36px"><a>Europa.</a></div><div class="wl" style="left:1968px;top:692.5px;width:571.5px">ital de la <a>Galia</a> durante el <a>Imperio romano</a>; durante la Edad Media, Lyon se <mark>convirtió</mark> en una ciudad <mark>comercial</mark> y <mark>después</mark> en el</div><div class="wl" style="left:1968px;top:709.0px;width:576px">una plaza <mark>financiera</mark> de primer orden. Su <mark>prosperidad económica aumentó sucesivamente</mark> por el <mark>monopolio</mark> <a>de la seda</a> y luego</div><div class="wl" style="left:1968px;top:725.8px;width:573px"><mark>ción</mark> de <mark>industrias,</mark> sobre todo <mark>textiles</mark> y de <mark>productos químicos</mark>. Hoy en día es un <mark>importante</mark> centro <mark>industrial especializado</mark> en</div><div class="wl" style="left:1968px;top:742.0px;width:189px"><mark>uímicas, farmacéuticas</mark> <a>y</a> <mark>biotecnológicas</mark>.</div><div class="wl" style="left:1968px;top:764.0px;width:560px">egunda ciudad <mark>universitaria</mark> de <mark>Francia, acogiendo</mark> en su área <mark>metropolitana</mark> a más de <mark>140 000 estudiantes</mark><sup>6</sup>  <mark>repartidos</mark> en</div><div class="wl" style="left:1968px;top:780.6px;width:568px"><mark>idades</mark> <a>y</a> <mark>numerosas escuelas</mark> <a>de</a> <mark>ingenieros</mark> <a>y</a> <a><i>grandes écoles</i></a>. <mark>Históricamente conocida</mark> como la capital mundial de la seda,<sup>7</sup></div><div class="wl" style="left:1968px;top:797.0px;width:572px">un <mark>patrimonio histórico</mark> y <mark>arquitectónico importante, poseyendo</mark> una gran <mark>superficie declarada Patrimonio</mark> <a>de la</a> <mark>Humanidad</mark> de</div><div style="left:1968px;top:834.500px;width:195px;height:40px;background:#f8f9fa;border:1px solid #a2a9b1;border-left:none"></div><div style="left:2006.700px;top:840px;height:16px;font:400 9.600px/16px 'Liberation Sans',sans-serif;white-space:pre;color:#202122"><b>Índice</b> <span style="color:#2a4b9b;font-size:8.600px">[ocultar]</span></div><div style="left:2556px;top:570.700px;width:218px;height:300px;background:#f8f9fa;border:1px solid #a2a9b1"></div><div style="left:2690px;top:572px;width:83px;height:33px;background:linear-gradient(100deg,#f8f9fa 0,#dcdcdc 45%,#b9b9b9 70%,#d8d8d8 100%)"></div><div style="left:2557px;top:580px;width:216px;height:18px;text-align:center;font:700 12.500px/18px 'Liberation Sans',sans-serif;color:#111">Lyon</div><div style="left:2557px;top:605px;width:216px;height:21px;background:#cfe0f7"></div><div style="left:2557px;top:609px;width:216px;height:14px;text-align:center;font:700 8.600px/14px 'Liberation Sans',sans-serif;color:#111">Ciudad y <span style="color:#2a4b9b">comuna</span></div><div class="ph" style="left:2574.800px;top:632px;width:89px;height:87.500px;background:linear-gradient(#34609c 0,#3d6aa6 35%,#2b4a78 60%,#15151c 82%,#0c0c10 100%)"><div style="left:18px;top:28px;width:56px;height:46px;background:radial-gradient(ellipse at 50% 60%,#ffb637 0,#e8711b 45%,#9c3d12 80%,transparent 100%)"></div><div style="left:30px;top:8px;width:7px;height:30px;background:#c9531a"></div><div style="left:56px;top:6px;width:7px;height:32px;background:#c9531a"></div><div style="left:8px;top:58px;width:14px;height:16px;background:#f3d9a0"></div></div><div class="ph" style="left:2666px;top:632px;width:91px;height:87.500px;background:linear-gradient(#0a0a14 0,#10101a 25%,#2a1f12 60%,#1e3a14 85%,#3c7d24 100%)"><div style="left:38px;top:14px;width:50px;height:44px;background:radial-gradient(ellipse at 50% 50%,#e9b64a 0,#b07a26 50%,#3a2a12 90%,transparent 100%)"></div><div style="left:2px;top:18px;width:44px;height:58px;background:radial-gradient(ellipse at 50% 50%,#8a7a5a 0,#4a4030 60%,transparent 100%)"></div><div style="left:50px;top:66px;width:41px;height:22px;background:#4c9a2c"></div></div><div class="ph" style="left:2574.800px;top:722px;width:58px;height:63px;background:linear-gradient(#6aa6e6 0,#8cc0f0 30%,#2a3a34 55%,#3e5a3a 80%,#2a3424 100%)"><div style="left:0;top:8px;width:34px;height:40px;background:linear-gradient(160deg,#1d2a30,#3a4a50)"></div></div><div class="ph" style="left:2634.800px;top:722px;width:62px;height:63px;background:linear-gradient(#58a6ea 0,#a8d4f4 35%,#c8ccd0 50%,#8a9098 70%,#6a7078 100%)"><div style="left:40px;top:0;width:22px;height:40px;background:#4a6a3a;opacity:.8"></div></div><div class="ph" style="left:2698.600px;top:722px;width:58.400px;height:63px;background:linear-gradient(100deg,#5a4c3c 0,#7a6a56 45%,#6a5a48 70%,#f4f4f4 92%)"><div style="left:0;top:48px;width:58px;height:15px;background:#3a342e"></div></div><div class="ph" style="left:2574.800px;top:787.400px;width:89px;height:66.600px;background:linear-gradient(#d4e4ee 0,#c2d4dc 18%,#7f9458 30%,#8a9a68 45%,#8c9296 55%,#4a5448 70%,#6a7a50 85%,#7c8a5c 100%)"></div><div class="ph" style="left:2666px;top:787.400px;width:91px;height:66.600px;background:linear-gradient(#16122a 0,#1e1838 40%,#2a2048 70%,#181428 100%)"><div style="left:56px;top:38px;width:24px;height:26px;border-radius:50%;background:radial-gradient(circle,#f8d8a0 0,#f08a30 50%,#c04a20 100%)"></div><div style="left:14px;top:8px;width:8px;height:30px;background:#2a3a7a"></div><div style="left:66px;top:10px;width:10px;height:28px;background:#3a3a6a"></div></div><div style="left:2557px;top:859.500px;width:216px;height:1px;background:#c8ccd1"></div><div style="left:2792px;top:430px;width:1px;height:438px;background:#e8e8e8"></div><div style="left:2795px;top:434px;width:6px;height:46px;border-radius:3px;background:#b4b4b4"></div><div style="left:1794px;top:440px;width:3px;height:8px;background:#556;opacity:.7"></div><div style="left:1794px;top:457px;width:3px;height:8px;background:#556;opacity:.7"></div><div style="left:1794px;top:474px;width:3px;height:8px;background:#e8d860;opacity:.7"></div><div style="left:1794px;top:491px;width:3px;height:8px;background:#556;opacity:.7"></div><div style="left:1794px;top:508px;width:3px;height:8px;background:#556;opacity:.7"></div><div style="left:1794px;top:525px;width:3px;height:8px;background:#e8d860;opacity:.7"></div><div style="left:1794px;top:542px;width:3px;height:8px;background:#556;opacity:.7"></div><div style="left:1794px;top:559px;width:3px;height:8px;background:#556;opacity:.7"></div><div style="left:1794px;top:576px;width:3px;height:8px;background:#e8d860;opacity:.7"></div><div style="left:1794px;top:593px;width:3px;height:8px;background:#556;opacity:.7"></div><div style="left:1794px;top:610px;width:3px;height:8px;background:#556;opacity:.7"></div><div style="left:1794px;top:627px;width:3px;height:8px;background:#e8d860;opacity:.7"></div><div style="left:1794px;top:644px;width:3px;height:8px;background:#556;opacity:.7"></div><div style="left:1794px;top:661px;width:3px;height:8px;background:#556;opacity:.7"></div><div style="left:1794px;top:678px;width:3px;height:8px;background:#e8d860;opacity:.7"></div><div style="left:1794px;top:695px;width:3px;height:8px;background:#556;opacity:.7"></div><div style="left:1794px;top:712px;width:3px;height:8px;background:#556;opacity:.7"></div><div style="left:1794px;top:729px;width:3px;height:8px;background:#e8d860;opacity:.7"></div><div style="left:1794px;top:746px;width:3px;height:8px;background:#556;opacity:.7"></div><div style="left:1794px;top:763px;width:3px;height:8px;background:#556;opacity:.7"></div><div style="left:1794px;top:780px;width:3px;height:8px;background:#e8d860;opacity:.7"></div><div style="left:1794px;top:797px;width:3px;height:8px;background:#556;opacity:.7"></div><div style="left:1794px;top:814px;width:3px;height:8px;background:#556;opacity:.7"></div><div style="left:1794px;top:831px;width:3px;height:8px;background:#e8d860;opacity:.7"></div><div style="left:1794px;top:848px;width:3px;height:8px;background:#556;opacity:.7"></div><div style="left:1788.500px;top:246px;width:180px;height:620px;border-radius:7px;background:#e4dddf;box-shadow:0 3px 12px rgba(0,0,0,.42),0 0 0 1px rgba(0,0,0,.12)"></div><div style="left:1792px;top:398px;width:172.500px;height:16px;border-radius:4px;background:#2a6fe8"></div><svg style="left:1796px;top:402px" width="8" height="8" viewBox="0 0 8 8"><path d="M1 4.500l2 2L7 1.500" fill="none" stroke="#fff" stroke-width="1.400"/></svg><div class="dd" style="top:253.0px">Български</div><div class="dd" style="top:269.0px">Català</div><div class="dd" style="top:285.0px">Čeština</div><div class="dd" style="top:301.0px">Cymraeg</div><div class="dd" style="top:317.0px">Dansk</div><div class="dd" style="top:333.0px">الدارجة</div><div class="dd" style="top:349.6px">Deutsch</div><div class="dd" style="top:366.0px">Eesti</div><div class="dd" style="top:382.0px">Ελληνικά</div><div class="dd" style="top:398.5px;color:#fff">Español</div><div class="dd" style="top:414.7px">Esperanto</div><div class="dd" style="top:431.0px">Euskara</div><div class="dd" style="top:447.0px">فارسی</div><div class="dd" style="top:463.0px">Fiji Hindi</div><div class="dd" style="top:479.7px">Føroyskt</div><div class="dd" style="top:496.0px">Français</div><div class="dd" style="top:512.0px">Frysk</div><div class="dd" style="top:528.5px">Gaeilge</div><div class="dd" style="top:544.7px">Gàidhlig</div><div class="dd" style="top:561.0px">Galego</div><div class="dd" style="top:577.0px">ગુજરાતી</div><div class="dd" style="top:593.5px">客家語/Hak-kâ-ngî</div><div class="dd" style="top:609.7px">한국어</div><div class="dd" style="top:626.0px">Hausa</div><div class="dd" style="top:642.0px">Hawaiʻi</div><div class="dd" style="top:658.4px">Հայերեն</div><div class="dd" style="top:674.6px">हिन्दी</div><div class="dd" style="top:691.0px">Hrvatski</div><div class="dd" style="top:707.0px">Ido</div><div class="dd" style="top:723.0px">Bahasa Indonesia</div><div class="dd" style="top:739.5px">Interlingue</div><div class="dd" style="top:755.7px">Ирон</div><div class="dd" style="top:772.0px">Íslenska</div><div class="dd" style="top:788.0px">Italiano</div><div class="dd" style="top:804.4px">עברית</div><div class="dd" style="top:820.6px">Jawa</div><div class="dd" style="top:837.0px">ಕನ್ನಡ</div><svg style="left:1873px;top:249px" width="10" height="6" viewBox="0 0 10 6"><path d="M1 5l4-4 4 4" fill="none" stroke="#333" stroke-width="1.500"/></svg><svg style="left:1873px;top:853px" width="10" height="6" viewBox="0 0 10 6"><path d="M1 1l4 4 4-4" fill="none" stroke="#333" stroke-width="1.500"/></svg><div style="left:1787px;top:864px;height:8px;font:400 7px/8px 'Liberation Sans',sans-serif;color:#445;white-space:pre">Toponimia                          1  Toponimia</div><div style="left:1758px;top:858px;width:12px;height:12px;background:radial-gradient(circle at 100% 0,transparent 0 10px,#05060c 11px)"></div><div style="left:1758px;top:868px;width:1062px;height:35px;background:linear-gradient(90deg,#020308 0,#050a1c 3%,#0c2048 6%,#141a3a 40%,#1a1c40 70%,#1a1436 100%)"></div><div style="left:1816px;top:871px;width:946px;height:29px;border-radius:6px;background:rgba(110,120,170,.5)"></div><div style="left:1820.8px;top:875px;width:18px;height:18px;border-radius:4.500px;background:linear-gradient(90deg,#2a9af5 50%,#eef1f5 50%);overflow:hidden"><div style="left:5px;top:11px;width:8px;height:1.5px;background:#123;border-radius:0px"></div></div><div style="left:1844.5px;top:875px;width:18px;height:18px;border-radius:4.500px;background:#f2f6fb;overflow:hidden"><div style="left:2px;top:2px;width:14px;height:14px;background:radial-gradient(circle,#fff 0 20%,#2a8af0 24% 100%);border-radius:7px"></div></div><div style="left:1868.2px;top:875px;width:18px;height:18px;border-radius:4.500px;background:linear-gradient(#5fe870,#22c038);overflow:hidden"><div style="left:4px;top:4px;width:10px;height:8px;background:#f0fff0;border-radius:5px"></div><div style="left:12px;top:-1px;width:7px;height:7px;background:#f2302a;border-radius:3.5px"></div></div><div style="left:1891.9px;top:875px;width:18px;height:18px;border-radius:4.500px;background:linear-gradient(#2a7af2,#28b2f8);overflow:hidden"><div style="left:3px;top:5px;width:12px;height:8px;background:#f4f8ff;border-radius:1px"></div></div><div style="left:1915.6px;top:875px;width:18px;height:18px;border-radius:4.500px;background:#3a1418;overflow:hidden"><div style="left:2px;top:2px;width:14px;height:14px;background:radial-gradient(circle,#5a2a3a 0 38%,#e8202a 42% 100%);border-radius:7px"></div></div><div style="left:1939.3px;top:875px;width:18px;height:18px;border-radius:4.500px;background:linear-gradient(#5fe870,#22c038);overflow:hidden"><div style="left:3px;top:5px;width:9px;height:8px;background:#f4fff4;border-radius:2px"></div><div style="left:12px;top:6px;width:4px;height:6px;background:#f4fff4;border-radius:0px"></div></div><div style="left:1963.0px;top:875px;width:18px;height:18px;border-radius:4.500px;background:#fafafa;overflow:hidden"><div style="left:2px;top:2px;width:14px;height:14px;background:conic-gradient(#f5c61c,#f2603a,#e8262a,#b03ae8,#2a7af2,#2ec8d8,#2ec84a,#f5c61c);border-radius:7px"></div><div style="left:6.5px;top:6.5px;width:5px;height:5px;background:#fff;border-radius:2.5px"></div></div><div style="left:1986.7px;top:875px;width:18px;height:18px;border-radius:4.500px;background:#5a3038;overflow:hidden"><div style="left:0px;top:0px;width:18px;height:5px;background:#8a2a30;border-radius:0px"></div><div style="left:0;top:5px;width:18px;text-align:center;font:400 10px/12px 'Liberation Sans',sans-serif;color:#9a8a8a">24</div><div style="left:12px;top:-2px;width:7px;height:7px;background:#a01828;border-radius:3.5px"></div></div><div style="left:2010.4px;top:875px;width:18px;height:18px;border-radius:4.500px;background:#fafafa;overflow:hidden"><div style="left:3px;top:3px;width:3px;height:3px;background:#2a7ae8;border-radius:1.5px"></div><div style="left:3px;top:8px;width:3px;height:3px;background:#e8443a;border-radius:1.5px"></div><div style="left:3px;top:13px;width:3px;height:3px;background:#f09a2a;border-radius:1.5px"></div><div style="left:8px;top:4px;width:8px;height:1px;background:#ccc;border-radius:0px"></div><div style="left:8px;top:9px;width:8px;height:1px;background:#ccc;border-radius:0px"></div><div style="left:8px;top:14px;width:8px;height:1px;background:#ccc;border-radius:0px"></div></div><div style="left:2034.1px;top:875px;width:18px;height:18px;border-radius:4.500px;background:#c9ccd2;overflow:hidden"><div style="left:3px;top:3px;width:5px;height:5px;background:#2ec84a;border-radius:1px"></div><div style="left:10px;top:3px;width:5px;height:5px;background:#f79a1c;border-radius:1px"></div><div style="left:3px;top:10px;width:5px;height:5px;background:#e8262a;border-radius:1px"></div><div style="left:10px;top:10px;width:5px;height:5px;background:#2a9af2;border-radius:1px"></div></div><div style="left:2057.8px;top:875px;width:18px;height:18px;border-radius:4.500px;background:#fbf8f0;overflow:hidden"><div style="left:0px;top:0px;width:18px;height:5px;background:#f9c81a;border-radius:0px"></div></div><div style="left:2081.5px;top:875px;width:18px;height:18px;border-radius:4.500px;background:linear-gradient(#fb5c74,#f2233b);overflow:hidden"><div style="left:6px;top:4px;width:2px;height:9px;background:#fff;border-radius:0px"></div><div style="left:6px;top:4px;width:7px;height:2px;background:#fff;border-radius:0px"></div><div style="left:3px;top:11px;width:5px;height:4px;background:#fff;border-radius:2px"></div></div><div style="left:2105.2px;top:875px;width:18px;height:18px;border-radius:4.500px;background:#fbfbfb;overflow:hidden"><div style="left:4px;top:4px;width:10px;height:10px;background:linear-gradient(135deg,#f2364a 50%,#f87a8a 50%);border-radius:1px"></div></div><div style="left:2128.9px;top:875px;width:18px;height:18px;border-radius:4.500px;background:linear-gradient(#1fb0fa,#1a62e8);overflow:hidden"><div style="left:0;top:3px;width:18px;text-align:center;font:700 12px/12px 'Liberation Sans',sans-serif;color:#fff">A</div></div><div style="left:2152.6px;top:875px;width:18px;height:18px;border-radius:4.500px;background:#1b1b1b;overflow:hidden"><div style="left:0;top:5px;width:18px;text-align:center;font:700 6.500px/8px 'Liberation Sans',sans-serif;color:#fff">tv</div></div><div style="left:2176.3px;top:875px;width:18px;height:18px;border-radius:4.500px;background:transparent;overflow:hidden"><div style="left:1px;top:3px;width:15px;height:13px;background:#e8c078;border-radius:7px"></div><div style="left:4px;top:6px;width:3px;height:3px;background:#e8262a;border-radius:1.5px"></div><div style="left:9px;top:5px;width:3px;height:3px;background:#2a7af2;border-radius:1.5px"></div><div style="left:11px;top:10px;width:3px;height:3px;background:#2ec84a;border-radius:1.5px"></div><div style="left:13px;top:0px;width:2px;height:14px;background:#2a5ad8;border-radius:0px"></div></div><div style="left:2200.0px;top:875px;width:18px;height:18px;border-radius:4.500px;background:#2a1a5a;overflow:hidden"><div style="left:2px;top:2px;width:14px;height:14px;background:radial-gradient(circle at 50% 60%,#7a3af0 0 35%,#ff7a1a 55%,#ffce2a 85%);border-radius:7px"></div></div><div style="left:2223.7px;top:875px;width:18px;height:18px;border-radius:4.500px;background:#c8c8c8;overflow:hidden"><div style="left:5px;top:3px;width:8px;height:12px;background:#2a2a2a;border-radius:1px"></div><div style="left:6px;top:4px;width:6px;height:3px;background:#d8d8d0;border-radius:0px"></div></div><div style="left:2247.4px;top:875px;width:18px;height:18px;border-radius:4.500px;background:#b3140f;overflow:hidden"><div style="left:0;top:3px;width:18px;text-align:center;font:italic 700 12px/12px 'Liberation Sans',sans-serif;color:#fff">Fz</div></div><div style="left:2271.1px;top:875px;width:18px;height:18px;border-radius:4.500px;background:radial-gradient(circle,#fff 0 40%,#b8a8e8 80%);overflow:hidden"><div style="left:0;top:2px;width:18px;text-align:center;font:700 13px/14px 'Liberation Serif',serif;color:#1a1a5a">B</div></div><div style="left:2294.8px;top:875px;width:18px;height:18px;border-radius:4.500px;background:linear-gradient(#2aa0fa,#1a62e0);overflow:hidden"><div style="left:8px;top:0px;width:2.5px;height:18px;background:#223;border-radius:0px"></div></div><div style="left:2318.5px;top:875px;width:18px;height:18px;border-radius:4.500px;background:#3a3a3a;overflow:hidden"><div style="left:2px;top:2px;width:14px;height:14px;background:radial-gradient(circle,#222 0 40%,#888 45% 60%,#333 64%);border-radius:7px"></div><div style="left:12px;top:-2px;width:7px;height:7px;background:#f2302a;border-radius:3.5px"></div></div><div style="left:2342.2px;top:875px;width:18px;height:18px;border-radius:4.500px;background:transparent;overflow:hidden"><div style="left:3px;top:4px;width:12px;height:11px;background:#f4f4f4;border-radius:6px 6px 1px 1px"></div><div style="left:6px;top:11px;width:2px;height:4px;background:#1a1c40;border-radius:0px"></div><div style="left:10px;top:11px;width:2px;height:4px;background:#1a1c40;border-radius:0px"></div></div><div style="left:2365.9px;top:875px;width:18px;height:18px;border-radius:4.500px;background:#dfe6f0;overflow:hidden"><div style="left:2px;top:2px;width:14px;height:8px;background:linear-gradient(#7ab0e8,#c8dcf0);border-radius:0px"></div><div style="left:9px;top:8px;width:7px;height:7px;background:#2a2a2a;border-radius:1px"></div></div><div style="left:2389.6px;top:875px;width:18px;height:18px;border-radius:4.500px;background:transparent;overflow:hidden"><div style="left:3px;top:0px;width:12px;height:18px;background:#f2f2f2;border-radius:1px"></div></div><div style="left:2413.3px;top:875px;width:18px;height:18px;border-radius:4.500px;background:linear-gradient(#c05af2,#7a1fd0);overflow:hidden"><div style="left:5px;top:3px;width:8px;height:8px;background:transparent;border:1.5px solid #fff;border-radius:4px"></div><div style="left:8px;top:10px;width:2px;height:6px;background:#fff;border-radius:1px"></div></div><div style="left:2437.0px;top:875px;width:18px;height:18px;border-radius:4.500px;background:transparent;overflow:hidden"><div style="left:1px;top:5px;width:14px;height:8px;background:#6e6450;border-radius:4px"></div><div style="left:3px;top:6px;width:4px;height:4px;background:#fff;border-radius:2px"></div><div style="left:8px;top:6px;width:4px;height:4px;background:#fff;border-radius:2px"></div></div><div style="left:2460.7px;top:875px;width:18px;height:18px;border-radius:4.500px;background:#2a7af5;overflow:hidden"><div style="left:3px;top:5px;width:9px;height:8px;background:#fff;border-radius:2px"></div><div style="left:12px;top:6px;width:4px;height:6px;background:#fff;border-radius:0px"></div></div><div style="left:2484.4px;top:875px;width:18px;height:18px;border-radius:4.500px;background:#4a3020;overflow:hidden"></div><div style="left:2508.1px;top:875px;width:18px;height:18px;border-radius:4.500px;background:conic-gradient(from 40deg,#fc2a6a,#f97a12,#0a7af2,#6a3af2,#fc2a6a);overflow:hidden"><div style="left:3px;top:3px;width:12px;height:12px;background:#111;border-radius:0px"></div></div><div style="left:2531.8px;top:875px;width:18px;height:18px;border-radius:4.500px;background:#1a1a1a;overflow:hidden"><div style="left:3px;top:4px;width:5px;height:1.5px;background:#ddd;border-radius:0px"></div></div><div style="left:2555.5px;top:875px;width:18px;height:18px;border-radius:4.500px;background:#16181c;overflow:hidden"><div style="left:2px;top:2px;width:13px;height:13px;background:radial-gradient(circle,#d8e8f8 0 40%,#2a8af2 45% 100%);border-radius:7px"></div></div><div style="left:2579.2px;top:875px;width:18px;height:18px;border-radius:4.500px;background:#f4f4f4;overflow:hidden"><div style="left:2px;top:2px;width:14px;height:14px;background:conic-gradient(from -30deg,#ea4335 0 120deg,#fbbc04 120deg 240deg,#34a853 240deg 360deg);border-radius:7px"></div><div style="left:6px;top:6px;width:6px;height:6px;background:#4285f4;border:1px solid #fff;border-radius:3px"></div></div><div style="left:2602.9px;top:875px;width:18px;height:18px;border-radius:4.500px;background:#fbfbfb;overflow:hidden"><div style="left:4px;top:3px;width:10px;height:12px;background:#111;border-radius:5px 5px 2px 2px"></div></div><div style="left:2627.6px;top:874px;width:1px;height:20px;background:#2a2e50"></div><div style="left:2635.6px;top:875px;width:18px;height:18px;border-radius:4.500px;background:linear-gradient(#2aa0fa,#1a62e0);overflow:hidden"><div style="left:8px;top:0px;width:2.5px;height:18px;background:#223;border-radius:0px"></div></div><div style="left:2659.3px;top:875px;width:18px;height:18px;border-radius:4.500px;background:linear-gradient(#f6f6f6,#d8d8d8);overflow:hidden"><div style="left:10px;top:-2px;width:2.5px;height:22px;background:#222;border-radius:0px"></div></div><div style="left:2684.0px;top:874px;width:1px;height:20px;background:#2a2e50"></div><div style="left:2692.0px;top:875px;width:18px;height:18px;border-radius:4.500px;background:transparent;overflow:hidden"><div style="left:1px;top:4px;width:16px;height:12px;background:#8c8a3a;border-radius:2px"></div><div style="left:1px;top:2px;width:7px;height:4px;background:#8c8a3a;border-radius:1px"></div><div style="left:4px;top:8px;width:10px;height:6px;background:#c8c47a;border-radius:1px"></div></div><div style="left:2715.7px;top:875px;width:18px;height:18px;border-radius:4.500px;background:transparent;overflow:hidden"><div style="left:1px;top:5px;width:14px;height:9px;background:#d8d8d8;border-radius:1px"></div><div style="left:10px;top:10px;width:7px;height:6px;background:#222;border-radius:1px"></div></div><div style="left:2739.4px;top:875px;width:18px;height:18px;border-radius:4.500px;background:transparent;overflow:hidden"><div style="left:4px;top:2px;width:11px;height:15px;background:rgba(225,230,230,.85);border-radius:1px 1px 4px 4px"></div><div style="left:3px;top:1px;width:13px;height:2.5px;background:#ccd;border-radius:0px"></div></div></div></div><div style="left:1486px;top:250px;width:272px;height:8px;background-image:radial-gradient(circle,#ffffc4 0,#ffffd8 2.600px,transparent 3.400px);background-size:16px 8px"></div><div style="left:1486px;top:906px;width:1330px;height:8px;background-image:radial-gradient(circle,#ffffe0 0,#ffffec 2.600px,transparent 3.400px);background-size:16px 8px;opacity:.6"></div><div style="left:2800px;top:322px;width:8px;height:540px;background-image:radial-gradient(circle,#ffffc4 0,#ffffd8 2.600px,transparent 3.400px);background-size:8px 16px;opacity:.35"></div><div style="left:1488px;top:244px;width:1328px;height:656px;border:4px dotted #1400c8;border-left:none"></div><div id="hdr">https://www.rjmprogramming.com.au/</div><div id="sel"></div><svg style="left:2206px;top:265px" width="20" height="12" viewBox="0 0 20 12"><path d="M1.500 1.500l8.500 8.500 8.500-8.500" fill="none" stroke="#111" stroke-width="2.400"/></svg><div style="left:2238px;top:271px;width:4px;height:13px;background:#222;opacity:.75"></div><div id="inp"></div><div id="inpt">*.[tjpmwag][xpnopaid][etgvf34]*</div><div style="left:2836px;top:224px;width:30px;height:1496px;background:#fafafa;border-left:1px solid #e6e6e6"></div><div style="left:2844px;top:230px;width:16px;height:948px;border-radius:8px;background:#b8b8b8"></div><div style="left:0;top:1624px;width:2866px;height:96px;background:linear-gradient(rgba(0,0,0,0) 0,rgba(0,0,0,.015) 45%,rgba(0,0,0,.05) 75%,rgba(0,0,0,.14) 100%)"></div><div id="bubble"><div>https://www.rjmprogramming.com.au/wiki_mark_eight_languages.jpg</div></div></div></div><div class="abs" style="left:2866px;top:49px;width:14px;height:1672px;background:linear-gradient(90deg,#7a7a7a 0,#8e8e8e 35%,#a6a6a6 100%)"><div style="left:0;top:0;width:14px;height:64px;background:linear-gradient(90deg,#9a9a94 0,#c2c2bc 40%,#bdbdb8 100%);border-radius:0 12px 0 0"></div><div style="left:9px;top:0;width:5px;height:8px;background:#4a2a1c"></div><div style="left:0;top:64px;width:5px;height:1608px;background:linear-gradient(90deg,#6a6a6a,#8a8a8a)"></div><div style="left:5px;top:352px;width:9px;height:300px;border-radius:8px 0 0 0;background:#b4b4b4"></div><div style="left:0;top:382px;width:14px;height:60px;background:#a4a8b0;opacity:.6"></div></div><div class="abs" style="left:0;top:0"><div id="dock"><div class="di" style="left:12.0px;background:#e9edf2;"><div style="left:0;top:0;width:19px;height:36px;background:linear-gradient(#2fa4f7,#0b63e0)"></div><div style="left:10px;top:22px;width:16px;height:8px;border-bottom:2px solid #123;border-radius:0 0 10px 10px"></div><div style="left:10px;top:10px;width:2px;height:5px;background:#123"></div><div style="left:25px;top:10px;width:2px;height:5px;background:#123"></div></div><div class="di" style="left:60.0px;background:#fafafa;"><div style="left:5px;top:8px;width:5px;height:5px;border-radius:50%;background:#2a7ae8"></div><div style="left:5px;top:16px;width:5px;height:5px;border-radius:50%;background:#e8443a"></div><div style="left:5px;top:24px;width:5px;height:5px;border-radius:50%;background:#f09a2a"></div><div style="left:13px;top:10px;width:17px;height:1.500px;background:#ccc"></div><div style="left:13px;top:18px;width:17px;height:1.500px;background:#ccc"></div><div style="left:13px;top:26px;width:17px;height:1.500px;background:#ccc"></div></div><div class="di" style="left:109.5px;background:linear-gradient(#1f6ef2,#25b4f8);"><div style="left:6px;top:11px;width:24px;height:15px;background:#f4f8ff;border-radius:2px"></div><svg style="left:6px;top:11px" width="24" height="15" viewBox="0 0 24 15"><path d="M0 0l12 9L24 0M0 15l9-8M24 15l-9-8" fill="none" stroke="#e8c89a" stroke-width="1.600"/></svg></div><div class="di" style="left:157.5px;background:linear-gradient(#5df06a,#1fc032);"><div style="left:7px;top:8px;width:22px;height:18px;border-radius:50%;background:radial-gradient(circle at 40% 35%,#fff,#d8eed8)"></div><div style="left:10px;top:23px;width:6px;height:5px;background:#e6f4e6;border-radius:0 0 0 6px"></div></div><div class="di" style="left:206.0px;background:#fbf8f0;"><div style="left:0;top:0;width:36px;height:8px;background:linear-gradient(#fdd835,#f9bf1a)"></div><div style="left:0;top:14px;width:36px;height:1px;background:#e0dccc"></div><div style="left:0;top:20px;width:36px;height:1px;background:#e0dccc"></div><div style="left:0;top:26px;width:36px;height:1px;background:#e0dccc"></div></div><div class="di" style="left:254.0px;background:#c9ccd2;"><div style="left:6px;top:6px;width:7px;height:7px;border-radius:2px;background:#2ec84a"></div><div style="left:15px;top:6px;width:7px;height:7px;border-radius:2px;background:#f79a1c"></div><div style="left:24px;top:6px;width:7px;height:7px;border-radius:2px;background:#f5c61c"></div><div style="left:6px;top:15px;width:7px;height:7px;border-radius:2px;background:#e8262a"></div><div style="left:15px;top:15px;width:7px;height:7px;border-radius:2px;background:#f2463a"></div><div style="left:24px;top:15px;width:7px;height:7px;border-radius:2px;background:#2a9af2"></div><div style="left:6px;top:24px;width:7px;height:7px;border-radius:2px;background:#8a3ae8"></div><div style="left:15px;top:24px;width:7px;height:7px;border-radius:2px;background:#2a7af2"></div><div style="left:24px;top:24px;width:7px;height:7px;border-radius:2px;background:#26c6da"></div></div><div class="di" style="left:303.6px;background:#fdfdfd;"><svg style="left:4px;top:6px" width="28" height="24" viewBox="0 0 28 24"><rect x="14" y="2" width="12" height="12" fill="#2a8af2" rx="2"/><circle cx="12" cy="16" r="7" fill="#f2603a"/><path d="M2 14c4-8 7 6 11-2s6 4 12-3" fill="none" stroke="#123a8a" stroke-width="2.400"/></svg></div><div class="di" style="left:351.6px;background:linear-gradient(#5df06a,#1fc032);"><div style="left:6px;top:11px;width:17px;height:14px;border-radius:4px;background:#f4fff4"></div><svg style="left:23px;top:12px" width="8" height="12" viewBox="0 0 8 12"><path d="M0 4l7-4v12L0 8z" fill="#f4fff4"/></svg></div><div class="di" style="left:400.0px;background:#161616;border:1px solid #3a3a3a;border-radius:3px"><div style="left:4px;top:6px;font:400 5px/6px 'Liberation Mono',monospace;color:#3c6">exec</div></div><div class="di" style="left:448.0px;background:#c8c8c8;"><div style="left:9px;top:5px;width:18px;height:26px;border-radius:3px;background:#2a2a2a"></div><div style="left:11px;top:7px;width:14px;height:6px;background:#d8d8d0"></div><div style="left:11px;top:15px;width:3.500px;height:3.500px;border-radius:50%;background:#eee"></div><div style="left:16px;top:15px;width:3.500px;height:3.500px;border-radius:50%;background:#eee"></div><div style="left:21px;top:15px;width:3.500px;height:3.500px;border-radius:50%;background:#f09a2a"></div><div style="left:11px;top:20px;width:3.500px;height:3.500px;border-radius:50%;background:#eee"></div><div style="left:16px;top:20px;width:3.500px;height:3.500px;border-radius:50%;background:#eee"></div><div style="left:21px;top:20px;width:3.500px;height:3.500px;border-radius:50%;background:#f09a2a"></div><div style="left:11px;top:25px;width:3.500px;height:3.500px;border-radius:50%;background:#eee"></div><div style="left:16px;top:25px;width:3.500px;height:3.500px;border-radius:50%;background:#eee"></div><div style="left:21px;top:25px;width:3.500px;height:3.500px;border-radius:50%;background:#f09a2a"></div></div><div class="di" style="left:497.6px;background:transparent;border-radius:0"><svg style="left:4px;top:0" width="30" height="38" viewBox="0 0 30 38"><path d="M1 1h18l10 10v26H1z" fill="#f6f6f6" stroke="#d0d0d0"/><path d="M19 1v10h10z" fill="#dcdcdc"/></svg></div><div class="di" style="left:546.0px;background:linear-gradient(#1fb0fa,#1a62e8);"><svg style="left:6px;top:6px" width="24" height="24" viewBox="0 0 24 24"><path d="M12 2L3 21M12 2l9 19M6 15h12M2 21h6M16 21h6" fill="none" stroke="#fff" stroke-width="2.600" stroke-linecap="round"/></svg></div><div class="di" style="left:594.0px;background:linear-gradient(#fb5c74,#f2233b);"><svg style="left:8px;top:7px" width="20" height="22" viewBox="0 0 20 22"><path d="M6 18V4l12-3v14" fill="none" stroke="#fff" stroke-width="2.400"/><ellipse cx="4" cy="18" rx="3.600" ry="2.800" fill="#fff"/><ellipse cx="16" cy="15.500" rx="3.600" ry="2.800" fill="#fff"/></svg></div><div class="di" style="left:642.5px;background:#b3140f;border-radius:3px;width:42px;height:42px;top:8.500px;margin-left:-3px;border:2px dotted #7a0a06"><div style="left:0;top:4px;width:36px;text-align:center;font:700 italic 27px/27px 'Liberation Sans',sans-serif;color:#fff;white-space:pre">Fz</div></div><div class="di" style="left:692.0px;background:linear-gradient(#b98b52,#a87a44);"><div style="left:8px;top:7px;width:20px;height:20px;border-radius:50%;border:2px solid #a07a48"></div><div style="left:14px;top:12px;width:8px;height:8px;border-radius:50%;background:#a07a48"></div></div><div class="di" style="left:739.7px;background:#fbfbfb;"><svg style="left:6px;top:6px" width="24" height="24" viewBox="0 0 24 24"><path d="M0 0h9l15 15v9h-9L0 9z" fill="#f2364a"/><path d="M0 13l11 11H0zM24 11L13 0h11z" fill="#f87a8a"/></svg></div><div class="di" style="left:787.0px;background:transparent;overflow:visible"><svg style="left:0;top:2px" width="38" height="32" viewBox="0 0 38 32"><path d="M4 8c4-6 14-6 18 0 3 5-1 10-6 11l16 12-3 1-15-11c-5 0-12-5-10-13z" fill="#6e6450"/><circle cx="9" cy="11" r="3.500" fill="#fff"/><circle cx="17" cy="11" r="3.500" fill="#fff"/><circle cx="10" cy="11.500" r="1.500" fill="#000"/><circle cx="18" cy="11.500" r="1.500" fill="#000"/></svg></div><div class="di" style="left:836.0px;background:#1b1b1b;"><div style="left:5px;top:11px;width:30px;font:700 13px/14px 'Liberation Sans',sans-serif;color:#fff;white-space:pre">  tv</div><div style="left:5px;top:11px;width:9px;height:13px;background:#1b1b1b"></div><svg style="left:5px;top:11px" width="9" height="12" viewBox="0 0 11 12"><path d="M7.600 0c.1.900-.5 1.800-1 2.200-.500.400-1.200.600-1.700.500C4.900 2 5.300 1.300 5.700.900 6.200.400 7 0 7.600 0zM10 8.700c-.6 1.500-1.600 3.200-2.800 3.200-.800 0-1-.5-2-.5s-1.300.5-2.100.5C1.600 11.900 0 9 0 6.800 0 4.500 1.500 3.300 2.900 3.300c.900 0 1.600.5 2.300.5.700 0 1.200-.5 2.400-.5.800 0 1.700.4 2.300 1.200C8 5.600 8.300 8.100 10 8.700z" fill="#fff"/></svg></div><div class="di" style="left:885.0px;background:#2a1a5a;"><div style="left:3px;top:3px;width:30px;height:30px;border-radius:50%;background:radial-gradient(circle at 50% 60%,#7a3af0 0 35%,#ff7a1a 55%,#ffce2a 85%)"></div><div style="left:14px;top:1px;width:16px;height:14px;border-radius:50% 50% 0 50%;background:#ffb62a"></div></div><div class="di" style="left:933.8px;background:linear-gradient(#2a86f2,#1a5ad8);"><div style="left:5px;top:5px;width:26px;height:26px;border-radius:50%;border:4px solid #e8eef8"></div><div style="left:16px;top:4px;width:4px;height:28px;background:#e8eef8;transform:rotate(-45deg)"></div></div><div class="di" style="left:982.0px;background:radial-gradient(circle,#fff 0 40%,#b8a8e8 75%,#7a62c8 100%);border-radius:12px"><div style="left:0;top:5px;width:36px;text-align:center;font:700 26px/26px 'Liberation Serif',sans-serif;color:#1a1a5a;white-space:pre">B</div></div><div class="di" style="left:1030.0px;background:#f2f4f6;"><div style="left:3px;top:3px;width:30px;height:30px;border-radius:50%;background:linear-gradient(#2ab0fa,#1a6ae8)"></div><div style="left:16.500px;top:6px;width:3px;height:24px;background:linear-gradient(#f2f2f2 50%,#f2453a 50%);transform:rotate(45deg)"></div></div><div class="di" style="left:1080.0px;background:#dfe6f0;"><div style="left:3px;top:3px;width:30px;height:16px;background:linear-gradient(#7ab0e8,#c8dcf0)"></div><div style="left:3px;top:19px;width:30px;height:12px;background:#e8ecf2"></div><div style="left:18px;top:16px;width:14px;height:14px;border-radius:3px;background:#2a2a2a"></div></div><div class="di" style="left:1128.0px;background:linear-gradient(#c05af2,#7a1fd0);"><div style="left:9px;top:7px;width:18px;height:18px;border-radius:50%;border:2.500px solid #fff"></div><div style="left:14.500px;top:12.500px;width:7px;height:7px;border-radius:50%;background:#fff"></div><div style="left:16px;top:20px;width:4px;height:11px;border-radius:2px;background:#fff"></div></div><div class="di" style="left:1176.0px;background:#1a1a1a;border:1px solid #3a3a3a;border-radius:3px"><div style="left:4px;top:6px;font:400 5px/6px 'Liberation Mono',monospace;color:#888">exec</div></div><div class="di" style="left:1223.5px;background:#fafafa;"><div style="left:0;top:0;width:36px;height:10px;background:#f2453a"></div><div style="left:0;top:2px;width:36px;text-align:center;font:700 6.5px/6.5px 'Liberation Sans',sans-serif;color:#fff;white-space:pre">FEB</div><div style="left:0;top:12px;width:36px;text-align:center;font:400 21px/21px 'Liberation Sans',sans-serif;color:#222;white-space:pre">17</div></div><div class="di" style="left:1272.0px;background:#111;border:1.500px solid #8a8a8a"><div style="left:5px;top:6px;font:700 9px/10px 'Liberation Mono',monospace;color:#eee;white-space:pre">&gt;_</div></div><div class="di" style="left:1322.0px;background:#16181c;border-radius:10px"><div style="left:4px;top:4px;width:26px;height:26px;border-radius:50%;border:5px solid #2a8af2;background:#d8e8f8"></div><div style="left:24px;top:24px;width:10px;height:5px;background:#888;transform:rotate(45deg)"></div></div><div class="di" style="left:1370.0px;background:conic-gradient(from 40deg,#fc2a6a,#f97a12,#0a7af2,#6a3af2,#fc2a6a);border-radius:4px"><div style="left:6px;top:6px;width:24px;height:24px;background:#111"></div><div style="left:9px;top:8px;font:700 11px/12px 'Liberation Sans',sans-serif;color:#fff">IJ</div><div style="left:9px;top:24px;width:9px;height:2px;background:#fff"></div></div><div class="di" style="left:1418.0px;background:transparent;border-radius:0"><svg style="left:4px;top:0" width="30" height="38" viewBox="0 0 30 38"><path d="M1 1h18l10 10v26H1z" fill="#f6f6f6" stroke="#d0d0d0"/><path d="M19 1v10h10z" fill="#dcdcdc"/></svg></div><div class="di" style="left:1466.0px;background:transparent;overflow:visible"><div style="left:2px;top:5px;width:30px;height:26px;border-radius:50%;background:#e8c078"></div><div style="left:6px;top:10px;width:6px;height:6px;border-radius:50%;background:#e8262a"></div><div style="left:14px;top:7px;width:6px;height:6px;border-radius:50%;background:#2a7af2"></div><div style="left:22px;top:10px;width:6px;height:6px;border-radius:50%;background:#2ec84a"></div><div style="left:7px;top:20px;width:6px;height:6px;border-radius:50%;background:#8a3ae8"></div><div style="left:16px;top:22px;width:6px;height:6px;border-radius:50%;background:#f5c61c"></div><div style="left:26px;top:0;width:4px;height:30px;background:#2a5ad8;transform:rotate(25deg)"></div></div><div class="di" style="left:1515.0px;background:#f4f4f4;"><div style="left:3px;top:3px;width:30px;height:30px;border-radius:50%;background:conic-gradient(from -30deg,#ea4335 0 120deg,#fbbc04 120deg 240deg,#34a853 240deg 360deg)"></div><div style="left:10.500px;top:10.500px;width:15px;height:15px;border-radius:50%;background:#4285f4;border:2.500px solid #fff"></div></div><div class="di" style="left:1564.0px;background:#0b5cff;"><div style="left:0;top:12px;width:36px;text-align:center;font:700 10.5px/10.5px 'Liberation Sans',sans-serif;color:#fff;white-space:pre">zoom</div></div><div class="di" style="left:1612.0px;background:linear-gradient(#9a9a9a,#6a6a6a);"><div style="left:4px;top:4px;width:28px;height:28px;border-radius:50%;border:3px solid #3a3a3a;background:radial-gradient(circle,#555 0 30%,#8a8a8a 32% 60%,#444 62%)"></div></div><div class="di" style="left:1660.0px;background:#fbfbfb;"><svg style="left:4px;top:4px" width="28" height="28" viewBox="0 0 28 28"><path d="M14 1L1 16l5 1-3 5 6-1 2 5 3-4 3 4 2-5 6 1-3-5 5-1z" fill="#111"/><path d="M14 4l4 5h-8z" fill="#fff"/></svg></div><div class="di" style="left:1709.6px;background:#1c1630;"><div style="left:5px;top:7px;width:26px;height:24px;border-radius:50%;background:radial-gradient(circle at 50% 55%,#f8e8f8 0 35%,#c8a0e8 60%,#8a5ad0 100%)"></div><div style="left:4px;top:4px;width:10px;height:10px;border-radius:50%;background:#a070d8"></div><div style="left:22px;top:4px;width:10px;height:10px;border-radius:50%;background:#a070d8"></div></div><div class="di" style="left:1758.0px;background:#fdfdfd;"><div style="left:7px;top:4px;width:22px;height:28px;border-radius:50%;border:6px solid #f2202a"></div></div><div class="di" style="left:1805.7px;background:transparent;"><svg style="left:3px;top:5px" width="30" height="28" viewBox="0 0 30 28"><path d="M3 27V13C3 6 8 2 13 2c3 0 4 1 6 1 5 0 8 4 8 9v15h-6v-8h-3v8h-6v-8c-1 1-3 1-4 1v7z" fill="#fff"/></svg></div><div class="di" style="left:1854.5px;background:#e8332a;"><div style="left:4px;top:4px;width:28px;height:28px;border-radius:50%;background:#1a1a1a;border:2px solid #c8c8c8"></div><div style="left:17px;top:2px;width:3px;height:32px;background:#f2453a;transform:rotate(35deg)"></div></div><div class="di" style="left:1903.7px;background:linear-gradient(#2aa0fa,#1a62e0);"><div style="left:6px;top:8px;width:24px;height:22px;border:1.500px solid #bfe0ff;border-radius:3px"></div><div style="left:16px;top:0;width:5px;height:36px;background:#3a3a3a;transform:rotate(35deg)"></div></div><div class="di" style="left:1974.0px;background:linear-gradient(#2a9cfa,#1a72f0);"><svg style="left:11px;top:6px" width="14" height="24" viewBox="0 0 14 24"><path d="M1 6l12 12-6 5V1l6 5L1 18" fill="none" stroke="#fff" stroke-width="2.200" stroke-linejoin="round"/></svg></div><div class="di" style="left:2022.0px;background:linear-gradient(#f6f6f6,#d8d8d8);"><div style="left:8px;top:6px;width:12px;height:22px;border-radius:6px;border:1.500px solid #c0c0c0"></div><div style="left:20px;top:-2px;width:5px;height:40px;background:#222;transform:rotate(22deg)"></div></div><div class="di" style="left:2069.6px;background:linear-gradient(#b4b8bc,#7c8084);"><div style="left:6px;top:5px;width:26px;height:26px;border-radius:50%;border:2.500px solid #333"></div><div style="left:17.500px;top:9px;width:4px;height:4px;border-radius:50%;background:#333"></div><div style="left:12px;top:14px;width:15px;height:2px;background:#333"></div><div style="left:18.500px;top:14px;width:2px;height:12px;background:#333"></div><div style="left:3px;top:17px;width:12px;height:12px;border-radius:50%;background:#333"></div></div><div style="left:85px;top:7px;width:15px;height:15px;border-radius:50%;background:#f2302a;font:400 8px/15px 'Liberation Sans',sans-serif;color:#fff;text-align:center">3</div><div style="left:178px;top:7px;width:24px;height:15px;border-radius:8px;background:#f2302a;font:400 8px/15px 'Liberation Sans',sans-serif;color:#fff;text-align:center">208</div><div style="left:1637px;top:7px;width:15px;height:15px;border-radius:50%;background:#f2302a;font:400 8px/15px 'Liberation Sans',sans-serif;color:#fff;text-align:center">2</div><div class="dot" style="left:27.0px"></div><div class="dot" style="left:172.5px"></div><div class="dot" style="left:657.5px"></div><div class="dot" style="left:997.0px"></div><div class="dot" style="left:1045.0px"></div><div class="dot" style="left:1287.0px"></div><div class="dot" style="left:1481.0px"></div><div class="dot" style="left:1530.0px"></div><div class="dot" style="left:1773.0px"></div><div class="dot" style="left:1820.7px"></div><div style="left:1955.7px;top:10px;width:2px;height:46px;background:#3a423a"></div><div style="left:2124.0px;top:10px;width:2px;height:46px;background:#3a423a"></div><div style="left:2140px;top:9px;width:34px;height:12px;background:#f0f0f0;border:1px solid #bbb"></div><div style="left:2138px;top:19px;width:38px;height:22px;background:#f4f4f4;border:1.500px solid #9a9a9a;border-radius:2px"></div><div style="left:2145px;top:27px;width:24px;height:8px;border:1px solid #aaa;border-radius:4px"></div><div class="th" style="left:2186.5px;background:#f7f7f7"></div><div style="left:2217.5px;top:46px;width:9px;height:6px;border:1px solid #8a8a8a;border-radius:1px"></div><div class="th" style="left:2235.0px;background:#f7f7f7"></div><div style="left:2266.0px;top:46px;width:9px;height:6px;border:1px solid #8a8a8a;border-radius:1px"></div><div class="th" style="left:2283.0px;background:#f7f7f7"></div><div style="left:2314.0px;top:46px;width:9px;height:6px;border:1px solid #8a8a8a;border-radius:1px"></div><div class="th" style="left:2331.0px;background:#f7f7f7"></div><div style="left:2362.0px;top:46px;width:9px;height:6px;border:1px solid #8a8a8a;border-radius:1px"></div><div class="th" style="left:2381.0px;background:#f7f7f7"></div><div style="left:2412.0px;top:46px;width:9px;height:6px;border:1px solid #8a8a8a;border-radius:1px"></div><div class="th" style="left:2428.5px;background:#f7f7f7"></div><div style="left:2459.5px;top:46px;width:9px;height:6px;border:1px solid #8a8a8a;border-radius:1px"></div><div class="th" style="left:2477.0px;background:linear-gradient(90deg,#d8d8d8 40%,#fff 40%)"></div><div class="th" style="left:2525.7px;background:#dcdcdc"></div><div style="left:2575.0px;top:18px;width:42px;height:24px;background:linear-gradient(#fff 0 30%,#f4ec8a 30% 48%,#e8e8f0 48%)"></div><div style="left:2602.0px;top:36px;width:15px;height:14px;border-radius:50%;background:radial-gradient(circle at 40% 40%,#e8c078 0 45%,#b04a8a 46% 70%,#2a5ad8 71%)"></div><div style="left:2623.0px;top:18px;width:42px;height:24px;background:linear-gradient(#fff 0 30%,#f4ec8a 30% 48%,#e8e8f0 48%)"></div><div style="left:2650.0px;top:36px;width:15px;height:14px;border-radius:50%;background:radial-gradient(circle at 40% 40%,#e8c078 0 45%,#b04a8a 46% 70%,#2a5ad8 71%)"></div><div style="left:2670.6px;top:18px;width:42px;height:24px;background:linear-gradient(#fff 0 30%,#f4ec8a 30% 48%,#e8e8f0 48%)"></div><div style="left:2697.6px;top:36px;width:15px;height:14px;border-radius:50%;background:radial-gradient(circle at 40% 40%,#e8c078 0 45%,#b04a8a 46% 70%,#2a5ad8 71%)"></div><div style="left:2719.0px;top:18px;width:42px;height:24px;background:linear-gradient(90deg,#a8a0e8 0 45%,#e8e0f8 45%)"></div><div style="left:2746.0px;top:36px;width:15px;height:14px;border-radius:50%;background:radial-gradient(circle at 40% 40%,#e8c078 0 45%,#b04a8a 46% 70%,#2a5ad8 71%)"></div><svg style="left:2772px;top:6px" width="36" height="46" viewBox="0 0 36 46"><path d="M3 8h30l-4 36H7z" fill="rgba(235,240,240,.78)" stroke="#d8dcdc" stroke-width="1.500"/><ellipse cx="18" cy="8" rx="15" ry="4" fill="#c8cccc" stroke="#eee"/><path d="M9 5l5 4 4-5 4 5 5-4" stroke="#555" fill="none" stroke-width="1.500"/><path d="M10 14l2 26M18 14v27M26 14l-2 26" stroke="#b0b8b8" stroke-width="1.200"/></svg></div></div></body></html>
